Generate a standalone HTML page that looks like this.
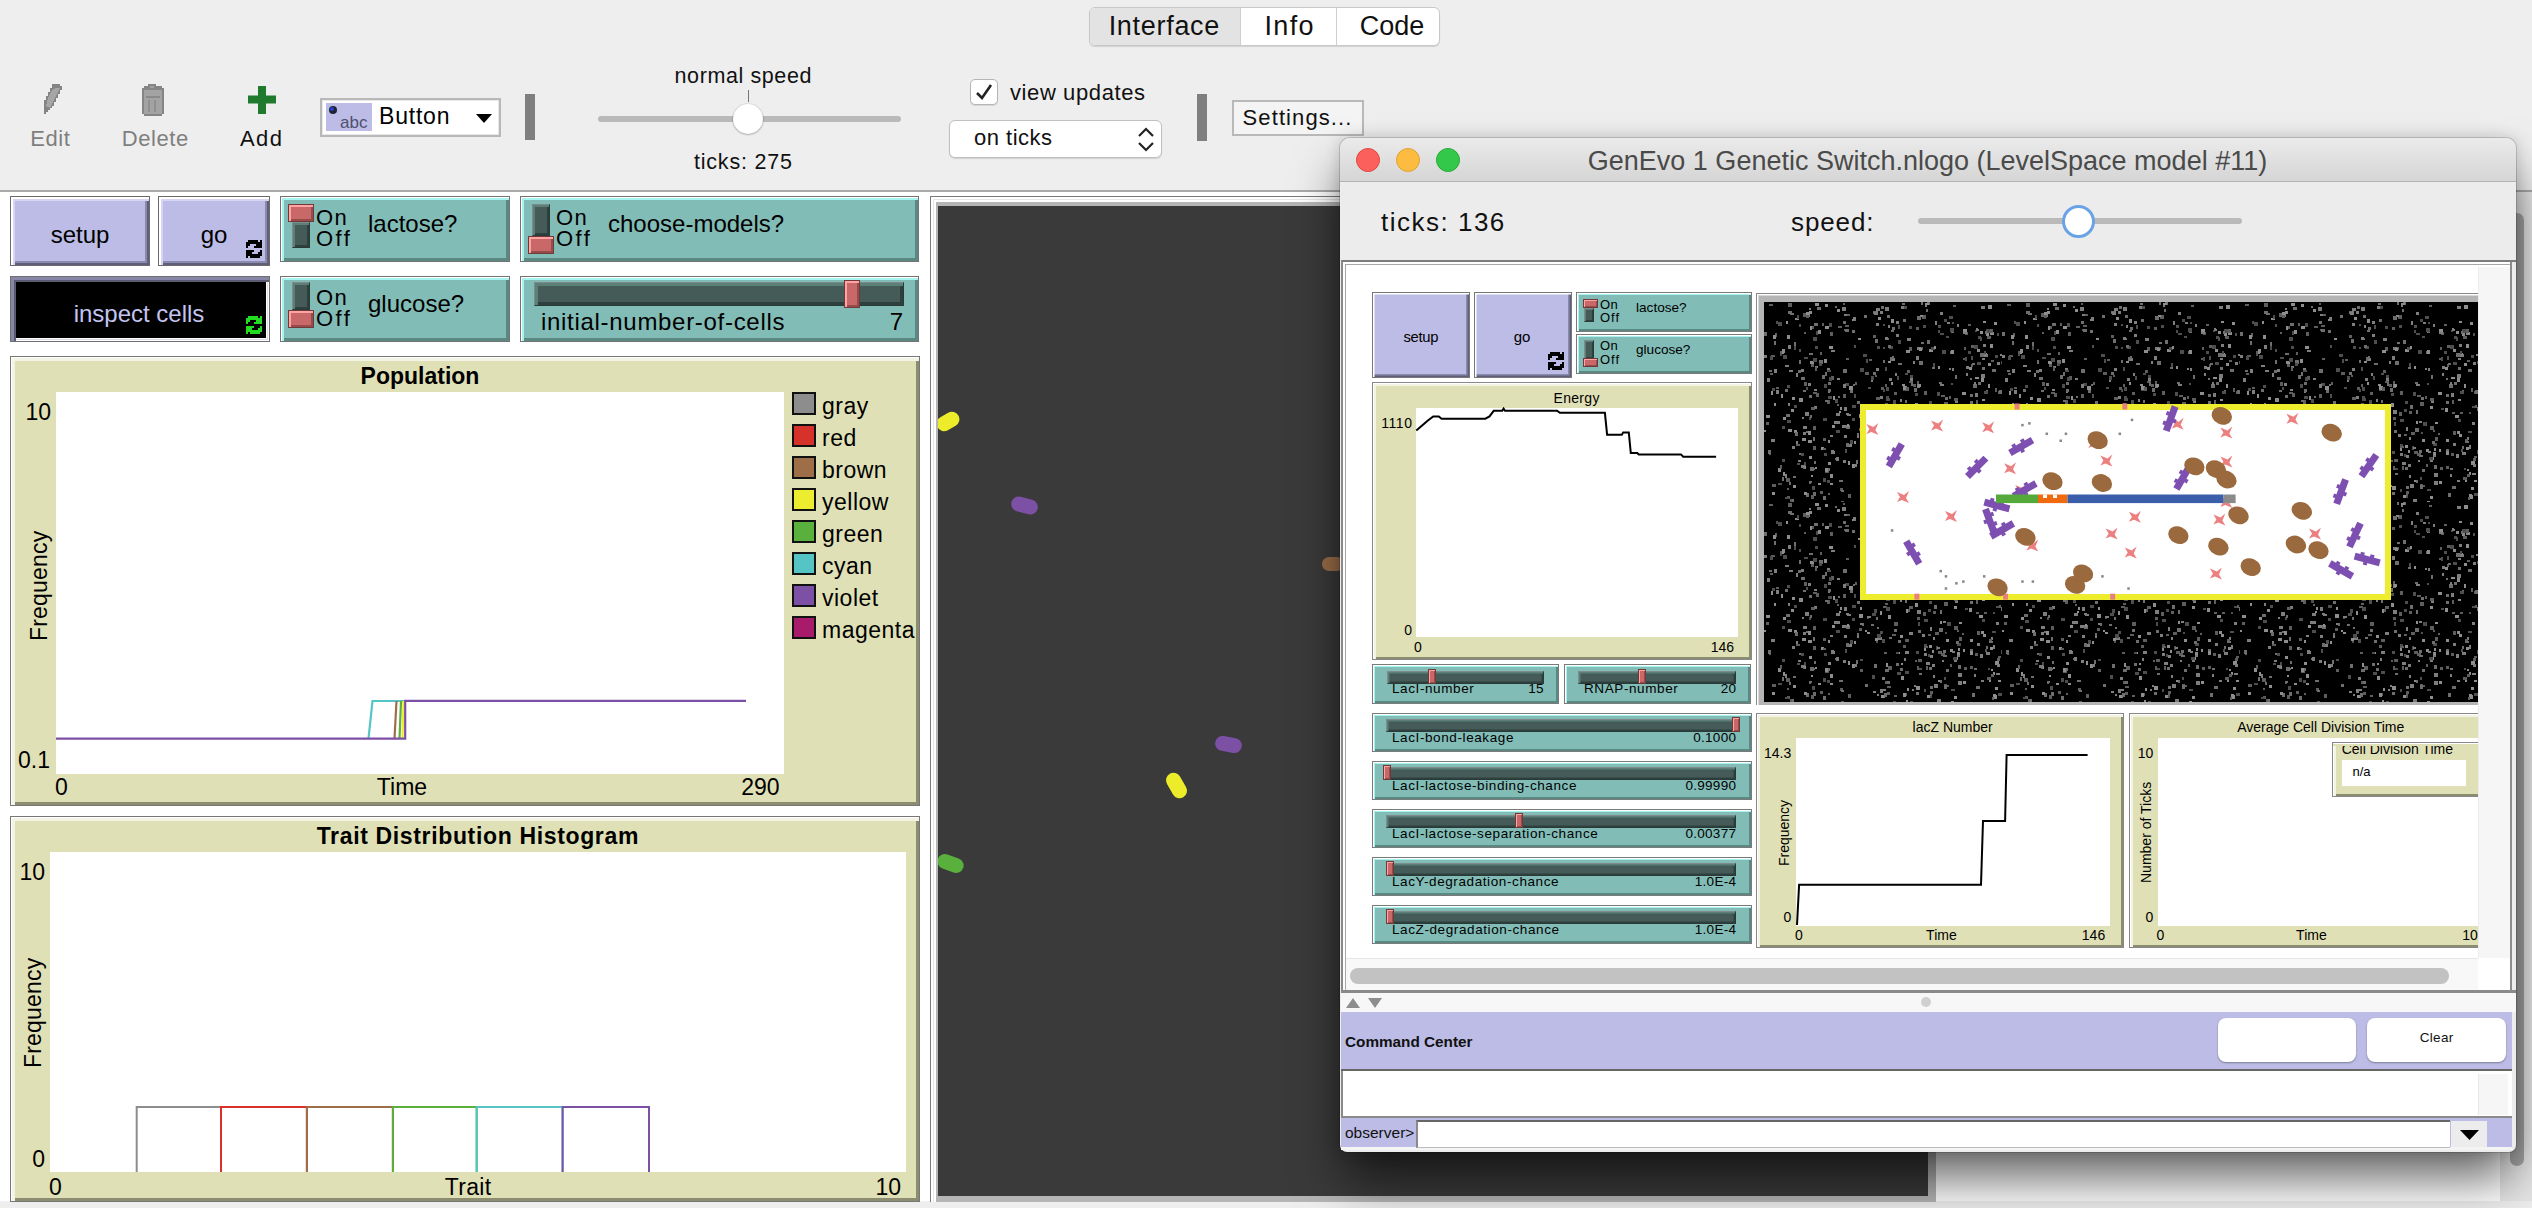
<!DOCTYPE html>
<html><head><meta charset="utf-8"><style>
html,body{margin:0;padding:0;}
body{width:2532px;height:1208px;overflow:hidden;position:relative;background:#ececec;font-family:"Liberation Sans", sans-serif;}
.b{position:absolute;box-sizing:border-box;}
.t{position:absolute;white-space:nowrap;line-height:1;font-family:"Liberation Sans", sans-serif;}
</style></head><body>
<div class="b" style="left:0px;top:0px;width:2532px;height:190px;background:#eeeeee"></div>
<div class="b" style="left:1089px;top:7px;width:351px;height:39px;background:#fff;border:1px solid #c8c8c8;border-radius:6px;box-shadow:0 1px 1px rgba(0,0,0,0.12)"></div>
<div class="b" style="left:1090px;top:8px;width:150px;height:37px;background:#e3e3e3;border-radius:5px 0 0 5px"></div>
<div class="b" style="left:1240px;top:8px;width:1px;height:37px;background:#cfcfcf"></div>
<div class="b" style="left:1336px;top:8px;width:1px;height:37px;background:#cfcfcf"></div>
<div class="t" style="left:664.3499999999999px;width:1000px;text-align:center;top:13.1px;font-size:27px;color:#111;letter-spacing:0.7px;">Interface</div>
<div class="t" style="left:789.6500000000001px;width:1000px;text-align:center;top:13.1px;font-size:27px;color:#111;letter-spacing:1.3px;">Info</div>
<div class="t" style="left:892px;width:1000px;text-align:center;top:13.1px;font-size:27px;color:#111;">Code</div>
<svg class="b" style="left:0;top:0" width="200" height="130" shape-rendering="crispEdges"><polygon points="52,84 60,84 60,86 62,86 62,90 60,90 60,94 58,94 58,98 56,98 56,102 54,102 54,106 52,106 52,108 50,108 50,110 48,110 48,112 46,112 46,114 44,114 44,100 46,100 46,96 48,96 48,92 50,92 50,88 52,88" fill="#848484"/><polygon points="48,98 50,94 52,90 56,88 60,88 58,92 56,96 54,100 52,104 50,108 46,106" fill="#a6a6a6"/><path d="M148,84 h8 v2 h6 v2 h2 v26 h-2 v2 h-18 v-2 h-2 v-26 h2 v-2 h4 Z" fill="#858585"/><rect x="144" y="90" width="18" height="24" fill="#a3a3a3"/><rect x="146" y="96" width="14" height="2" fill="#8a8a8a"/><rect x="148" y="100" width="2" height="12" fill="#909090"/><rect x="154" y="100" width="2" height="12" fill="#909090"/><rect x="150" y="86" width="4" height="2" fill="#a0a0a0"/></svg>
<svg class="b" style="left:247px;top:85px" width="30" height="30" viewBox="0 0 30 30"><rect x="11" y="1" width="8" height="28" fill="#1f7a2e"/><rect x="1" y="10.5" width="28" height="8" fill="#1f7a2e"/></svg>
<div class="t" style="left:-449.7px;width:1000px;text-align:center;top:128.4px;font-size:22px;color:#7f7f7f;letter-spacing:0.6px;">Edit</div>
<div class="t" style="left:-344.7px;width:1000px;text-align:center;top:128.4px;font-size:22px;color:#7f7f7f;letter-spacing:0.6px;">Delete</div>
<div class="t" style="left:-238.3px;width:1000px;text-align:center;top:128.4px;font-size:22px;color:#111;letter-spacing:1.4px;">Add</div>
<div class="b" style="left:320px;top:98px;width:181px;height:39px;background:#fff;border:2px solid #b8b8b8;box-shadow:inset 0 0 0 1px #e8e8e8"></div>
<div class="b" style="left:326px;top:103px;width:46px;height:28px;background:#bcbce6"></div>
<div class="t" style="left:345px;top:104px;font-size:17px;color:#555;letter-spacing:-0.5px;line-height:1">&nbsp;</div>
<div class="t" style="left:340px;top:113.6px;font-size:17px;color:#505070;">abc</div>
<svg class="b" style="left:327px;top:104px" width="14" height="12"><circle cx="6" cy="6" r="4" fill="#223"/><circle cx="5" cy="5" r="2" fill="#24c"/></svg>
<div class="t" style="left:379px;top:104.5px;font-size:23px;color:#000;letter-spacing:0.8px;">Button</div>
<svg class="b" style="left:475px;top:113px" width="18" height="11"><path d="M1 1 L17 1 L9 10 Z" fill="#000"/></svg>
<div class="b" style="left:525px;top:94px;width:10px;height:46px;background:#7f7f7f"></div>
<div class="t" style="left:243.29999999999995px;width:1000px;text-align:center;top:65.8px;font-size:21.5px;color:#111;letter-spacing:0.6px;">normal speed</div>
<div class="b" style="left:747.5px;top:90px;width:1.5px;height:12px;background:#777"></div>
<div class="b" style="left:598px;top:116px;width:303px;height:6px;background:#b9b9b9;border-radius:3px"></div>
<div class="b" style="left:733px;top:104px;width:30px;height:30px;background:#fff;border-radius:50%;box-shadow:0 0.5px 2px rgba(0,0,0,0.45)"></div>
<div class="t" style="left:243.39999999999998px;width:1000px;text-align:center;top:151.8px;font-size:21.5px;color:#111;letter-spacing:0.8px;">ticks: 275</div>
<div class="b" style="left:970px;top:79px;width:28px;height:26px;background:#fff;border:1px solid #b5b5b5;border-radius:5px;box-shadow:0 1px 1px rgba(0,0,0,0.1)"></div>
<svg class="b" style="left:973px;top:82px" width="22" height="20"><path d="M4 11 L9 16 L18 3" stroke="#222" stroke-width="2.6" fill="none"/></svg>
<div class="t" style="left:1010px;top:82.4px;font-size:22px;color:#111;letter-spacing:0.6px;">view updates</div>
<div class="b" style="left:949px;top:120px;width:213px;height:38px;background:#fff;border:1px solid #c0c0c0;border-radius:6px;box-shadow:0 1px 1px rgba(0,0,0,0.12)"></div>
<div class="t" style="left:974px;top:127.4px;font-size:22px;color:#111;letter-spacing:0.5px;">on ticks</div>
<svg class="b" style="left:1136px;top:126px" width="20" height="28"><path d="M3 10 L10 3 L17 10" stroke="#222" stroke-width="2.2" fill="none"/><path d="M3 17 L10 24 L17 17" stroke="#222" stroke-width="2.2" fill="none"/></svg>
<div class="b" style="left:1197px;top:94px;width:10px;height:47px;background:#7f7f7f"></div>
<div class="b" style="left:1232px;top:100px;width:132px;height:36px;background:#f4f4f4;border:2px solid #b9b9b9"></div>
<div class="t" style="left:797.55px;width:1000px;text-align:center;top:107.4px;font-size:22px;color:#111;letter-spacing:1.1px;">Settings...</div>
<div class="b" style="left:0px;top:190px;width:2532px;height:2px;background:#a9a9a9"></div>
<div class="b" style="left:0px;top:192px;width:2532px;height:1009px;background:#fff"></div>
<div class="b" style="left:0px;top:1201px;width:2532px;height:7px;background:#eeeeee"></div>
<div class="b" style="left:10px;top:196px;width:140px;height:70px;background:#bcbce6;border:1px solid #6a6a6a;box-shadow:inset 2px 2px 0 #fff, inset 4px 4px 0 #d6d6f2, inset -2px -2px 0 #5f5f7c, inset -4px -4px 0 #8a8aae"></div>
<div class="t" style="left:-420px;width:1000px;text-align:center;top:223.2px;font-size:24px;color:#000;">setup</div>
<div class="b" style="left:158px;top:196px;width:112px;height:70px;background:#bcbce6;border:1px solid #6a6a6a;box-shadow:inset 2px 2px 0 #fff, inset 4px 4px 0 #d6d6f2, inset -2px -2px 0 #5f5f7c, inset -4px -4px 0 #8a8aae"></div>
<div class="t" style="left:-286px;width:1000px;text-align:center;top:223.2px;font-size:24px;color:#000;">go</div>
<svg class="b" style="left:246px;top:240px" width="16.0" height="18.0" viewBox="0 0 8 9" shape-rendering="crispEdges"><g fill="#000"><rect x="1" y="0" width="5" height="1"/><rect x="7" y="0" width="1" height="1"/><rect x="0" y="1" width="8" height="1"/><rect x="0" y="2" width="2" height="1"/><rect x="5" y="2" width="3" height="1"/><rect x="0" y="3" width="1" height="1"/><rect x="4" y="3" width="4" height="1"/><rect x="0" y="5" width="4" height="1"/><rect x="7" y="5" width="1" height="1"/><rect x="0" y="6" width="3" height="1"/><rect x="6" y="6" width="2" height="1"/><rect x="0" y="7" width="8" height="1"/><rect x="0" y="8" width="1" height="1"/><rect x="2" y="8" width="5" height="1"/></g></svg>
<div class="b" style="left:10px;top:276px;width:260px;height:66px;background:#000;border:1px solid #707070;box-shadow:inset 3px 3px 0 #8686a6, inset 5px 5px 0 #5a5a72, inset -1px -1px 0 #fff, inset -2px -2px 0 #dcdcec, inset -3px -3px 0 #fff"></div>
<div class="t" style="left:-361px;width:1000px;text-align:center;top:301.7px;font-size:24px;color:#c4c4f0;">inspect cells</div>
<svg class="b" style="left:246px;top:316px" width="16.0" height="18.0" viewBox="0 0 8 9" shape-rendering="crispEdges"><g fill="#22dd22"><rect x="1" y="0" width="5" height="1"/><rect x="7" y="0" width="1" height="1"/><rect x="0" y="1" width="8" height="1"/><rect x="0" y="2" width="2" height="1"/><rect x="5" y="2" width="3" height="1"/><rect x="0" y="3" width="1" height="1"/><rect x="4" y="3" width="4" height="1"/><rect x="0" y="5" width="4" height="1"/><rect x="7" y="5" width="1" height="1"/><rect x="0" y="6" width="3" height="1"/><rect x="6" y="6" width="2" height="1"/><rect x="0" y="7" width="8" height="1"/><rect x="0" y="8" width="1" height="1"/><rect x="2" y="8" width="5" height="1"/></g></svg>
<div class="b" style="left:280px;top:196px;width:230px;height:66px;background:#82bcb6;border:1px solid #737373;box-shadow:inset 1px 1px 0 #fff, inset 3px 3px 0 #a8f2ef, inset -3px -3px 0 #5a8883"></div>
<div class="b" style="left:288px;top:204px;width:26px;height:18px;background:#c86868;border:1px solid #6e3a3a;box-shadow:inset 2px 2px 0 #ffa3a3, inset -2px -2px 0 #974b4b"></div>
<div class="b" style="left:292px;top:222px;width:18px;height:26px;background:#445b58;border:1px solid #7d8b89;border-right-color:#2a3a38;border-bottom-color:#2a3a38;box-shadow:inset 2px 2px 0 #5c7f7a, inset -2px -2px 0 #2e403e"></div>
<div class="t" style="left:316px;top:206.9px;font-size:22px;color:#000;letter-spacing:1.5px;">On</div>
<div class="t" style="left:316px;top:227.9px;font-size:22px;color:#000;letter-spacing:2.5px;">Off</div>
<div class="t" style="left:368px;top:211.7px;font-size:24px;color:#000;">lactose?</div>
<div class="b" style="left:280px;top:276px;width:230px;height:66px;background:#82bcb6;border:1px solid #737373;box-shadow:inset 1px 1px 0 #fff, inset 3px 3px 0 #a8f2ef, inset -3px -3px 0 #5a8883"></div>
<div class="b" style="left:292px;top:282px;width:18px;height:28px;background:#445b58;border:1px solid #7d8b89;border-right-color:#2a3a38;border-bottom-color:#2a3a38;box-shadow:inset 2px 2px 0 #5c7f7a, inset -2px -2px 0 #2e403e"></div>
<div class="b" style="left:288px;top:310px;width:26px;height:18px;background:#c86868;border:1px solid #6e3a3a;box-shadow:inset 2px 2px 0 #ffa3a3, inset -2px -2px 0 #974b4b"></div>
<div class="t" style="left:316px;top:286.9px;font-size:22px;color:#000;letter-spacing:1.5px;">On</div>
<div class="t" style="left:316px;top:307.9px;font-size:22px;color:#000;letter-spacing:2.5px;">Off</div>
<div class="t" style="left:368px;top:291.7px;font-size:24px;color:#000;">glucose?</div>
<div class="b" style="left:520px;top:196px;width:399px;height:66px;background:#82bcb6;border:1px solid #737373;box-shadow:inset 1px 1px 0 #fff, inset 3px 3px 0 #a8f2ef, inset -3px -3px 0 #5a8883"></div>
<div class="b" style="left:532px;top:204px;width:18px;height:32px;background:#445b58;border:1px solid #7d8b89;border-right-color:#2a3a38;border-bottom-color:#2a3a38;box-shadow:inset 2px 2px 0 #5c7f7a, inset -2px -2px 0 #2e403e"></div>
<div class="b" style="left:528px;top:236px;width:26px;height:18px;background:#c86868;border:1px solid #6e3a3a;box-shadow:inset 2px 2px 0 #ffa3a3, inset -2px -2px 0 #974b4b"></div>
<div class="t" style="left:556px;top:206.9px;font-size:22px;color:#000;letter-spacing:1.5px;">On</div>
<div class="t" style="left:556px;top:227.9px;font-size:22px;color:#000;letter-spacing:2.5px;">Off</div>
<div class="t" style="left:608px;top:211.7px;font-size:24px;color:#000;">choose-models?</div>
<div class="b" style="left:520px;top:276px;width:399px;height:66px;background:#82bcb6;border:1px solid #737373;box-shadow:inset 1px 1px 0 #fff, inset 3px 3px 0 #a8f2ef, inset -3px -3px 0 #5a8883"></div>
<div class="b" style="left:534px;top:282px;width:370px;height:24px;background:#445b58;border:1px solid #7d8b89;border-right-color:#2a3a38;border-bottom-color:#2a3a38;box-shadow:inset 3px 3px 0 #5c7f7a, inset -3px -3px 0 #2e403e"></div>
<div class="b" style="left:844px;top:280px;width:16px;height:28px;background:#c86868;border:1px solid #6e3a3a;box-shadow:inset 2px 2px 0 #ffa3a3, inset -2px -2px 0 #974b4b"></div>
<div class="t" style="left:541px;top:309.7px;font-size:24px;color:#000;letter-spacing:0.7px;">initial-number-of-cells</div>
<div class="t" style="left:-97px;width:1000px;text-align:right;top:309.7px;font-size:24px;color:#000;">7</div>
<div class="b" style="left:10px;top:356px;width:910px;height:450px;background:#e0e0b6;border:1px solid #777;box-shadow:inset 1px 1px 0 #fff, inset 4px 4px 0 #f4f4e4, inset -3px -3px 0 #8c8c70"></div>
<div class="b" style="left:56px;top:392px;width:728px;height:382px;background:#fff"></div>
<div class="t" style="left:-80px;width:1000px;text-align:center;top:364.5px;font-size:23px;color:#000;font-weight:bold;">Population</div>
<div class="t" style="left:-949px;width:1000px;text-align:right;top:400.9px;font-size:23px;color:#000;">10</div>
<div class="t" style="left:-950px;width:1000px;text-align:right;top:748.5px;font-size:23px;color:#000;">0.1</div>
<div class="t" style="left:55px;top:776.1px;font-size:23px;color:#000;">0</div>
<div class="t" style="left:-98px;width:1000px;text-align:center;top:776.1px;font-size:23px;color:#000;">Time</div>
<div class="t" style="left:-220.5px;width:1000px;text-align:right;top:776.1px;font-size:23px;color:#000;">290</div>
<div class="t" style="left:-10.5px;top:579px;width:100px;text-align:center;font-size:23px;letter-spacing:0.2px;transform:rotate(-90deg);transform-origin:50px 12px">Frequency</div>
<div class="b" style="left:792px;top:392px;width:24px;height:23px;background:#8d8d8d;border:2px solid #111"></div>
<div class="t" style="left:822px;top:394.5px;font-size:23px;color:#000;letter-spacing:0.5px;">gray</div>
<div class="b" style="left:792px;top:424px;width:24px;height:23px;background:#d73229;border:2px solid #111"></div>
<div class="t" style="left:822px;top:426.5px;font-size:23px;color:#000;letter-spacing:0.5px;">red</div>
<div class="b" style="left:792px;top:456px;width:24px;height:23px;background:#9d6e48;border:2px solid #111"></div>
<div class="t" style="left:822px;top:458.5px;font-size:23px;color:#000;letter-spacing:0.5px;">brown</div>
<div class="b" style="left:792px;top:488px;width:24px;height:23px;background:#eded30;border:2px solid #111"></div>
<div class="t" style="left:822px;top:490.5px;font-size:23px;color:#000;letter-spacing:0.5px;">yellow</div>
<div class="b" style="left:792px;top:520px;width:24px;height:23px;background:#59b03c;border:2px solid #111"></div>
<div class="t" style="left:822px;top:522.5px;font-size:23px;color:#000;letter-spacing:0.5px;">green</div>
<div class="b" style="left:792px;top:552px;width:24px;height:23px;background:#54c4c4;border:2px solid #111"></div>
<div class="t" style="left:822px;top:554.5px;font-size:23px;color:#000;letter-spacing:0.5px;">cyan</div>
<div class="b" style="left:792px;top:584px;width:24px;height:23px;background:#7c50a4;border:2px solid #111"></div>
<div class="t" style="left:822px;top:586.5px;font-size:23px;color:#000;letter-spacing:0.5px;">violet</div>
<div class="b" style="left:792px;top:616px;width:24px;height:23px;background:#a71b6a;border:2px solid #111"></div>
<div class="t" style="left:822px;top:618.5px;font-size:23px;color:#000;letter-spacing:0.5px;">magenta</div>
<svg class="b" style="left:0;top:0" width="2532" height="1208"><g fill="none" stroke-width="2.2"><polyline points="368.5,738.5 372.5,701 405.5,701" stroke="#54c4c4"/><polyline points="394.5,738.5 396.5,701" stroke="#9d6e48"/><polyline points="399.5,738.5 401,701" stroke="#59b03c"/><polyline points="402.5,738.5 403.5,701" stroke="#eded30"/><polyline points="56,738.7 405.2,738.7 405.2,700.8 746,700.8" stroke="#7c50a4"/></g></svg>
<div class="b" style="left:10px;top:816px;width:910px;height:386px;background:#e0e0b6;border:1px solid #777;box-shadow:inset 1px 1px 0 #fff, inset 4px 4px 0 #f4f4e4, inset -3px -3px 0 #8c8c70"></div>
<div class="b" style="left:50px;top:852px;width:856px;height:320px;background:#fff"></div>
<div class="t" style="left:-22.17500000000001px;width:1000px;text-align:center;top:824.5px;font-size:23px;color:#000;font-weight:bold;letter-spacing:0.65px;">Trait Distribution Histogram</div>
<div class="t" style="left:-955px;width:1000px;text-align:right;top:860.8px;font-size:23px;color:#000;">10</div>
<div class="t" style="left:-955px;width:1000px;text-align:right;top:1147.5px;font-size:23px;color:#000;">0</div>
<div class="t" style="left:49px;top:1176.0px;font-size:23px;color:#000;">0</div>
<div class="t" style="left:-31.850000000000023px;width:1000px;text-align:center;top:1176.0px;font-size:23px;color:#000;letter-spacing:0.3px;">Trait</div>
<div class="t" style="left:-99px;width:1000px;text-align:right;top:1176.0px;font-size:23px;color:#000;">10</div>
<div class="t" style="left:-16px;top:1006px;width:100px;text-align:center;font-size:23px;letter-spacing:0.2px;transform:rotate(-90deg);transform-origin:50px 12px">Frequency</div>
<svg class="b" style="left:0;top:0" width="2532" height="1208"><g fill="none" stroke-width="2"><polyline points="136.7,1172 136.7,1107 221,1107 221,1172" stroke="#8d8d8d"/><polyline points="221,1172 221,1107 306.9,1107 306.9,1172" stroke="#d73229"/><polyline points="306.9,1172 306.9,1107 392.9,1107 392.9,1172" stroke="#9d6e48"/><polyline points="392.9,1172 392.9,1107 476.7,1107 476.7,1172" stroke="#59b03c"/><polyline points="476.7,1172 476.7,1107 562.6,1107 562.6,1172" stroke="#54c4c4"/><polyline points="562.6,1172 562.6,1107 649,1107 649,1172" stroke="#7c50a4"/></g></svg>
<div class="b" style="left:930px;top:196px;width:1006px;height:1006px;background:#fff;border-top:1px solid #7a7a7a;border-left:1px solid #7a7a7a"></div>
<div class="b" style="left:933px;top:199px;width:1003px;height:1003px;background:#fff;border-top:1px solid #e6e6e6;border-left:1px solid #e6e6e6"></div>
<div class="b" style="left:936px;top:202px;width:1000px;height:1000px;background:#b5b5b5"></div>
<div class="b" style="left:938px;top:206px;width:990px;height:990px;background:#3a3a3a"></div>
<div class="b" style="left:938px;top:206px;width:990px;height:990px;overflow:hidden">
<div class="b" style="left:-2.0px;top:207.5px;width:24px;height:15px;background:#ecec2a;border-radius:7.5px;transform:rotate(-30deg)"></div>
<div class="b" style="left:72.5px;top:291.5px;width:27px;height:15px;background:#7c50a4;border-radius:7.5px;transform:rotate(15deg)"></div>
<div class="b" style="left:276.5px;top:530.5px;width:27px;height:15px;background:#7c50a4;border-radius:7.5px;transform:rotate(10deg)"></div>
<div class="b" style="left:224.5px;top:571.5px;width:27px;height:15px;background:#ecec2a;border-radius:7.5px;transform:rotate(60deg)"></div>
<div class="b" style="left:-1.5px;top:649.5px;width:27px;height:15px;background:#59b03c;border-radius:7.5px;transform:rotate(20deg)"></div>
<div class="b" style="left:384.0px;top:351.0px;width:22px;height:14px;background:#9d6e48;border-radius:7.0px;transform:rotate(0deg)"></div>
</div>
<div class="b" style="left:2500px;top:192px;width:32px;height:1009px;background:#e6e6e6"></div>
<div class="b" style="left:2510px;top:213px;width:14px;height:953px;background:#a6a6a6;border-radius:7px"></div>
<div class="b" style="left:1340px;top:138px;width:1176px;height:1014px;background:#ececec;border-radius:10px 10px 7px 7px;box-shadow:0 30px 50px -4px rgba(0,0,0,0.62), 0 0 16px rgba(0,0,0,0.16), 0 0 0 1px rgba(0,0,0,0.15)"></div>
<div class="b" style="left:1340px;top:138px;width:1176px;height:44px;background:linear-gradient(#ebebeb,#d5d5d5);border-radius:10px 10px 0 0;border-bottom:1px solid #b3b3b3"></div>
<div class="b" style="left:1356px;top:148px;width:24px;height:24px;background:#fc605c;border-radius:50%;border:1px solid #de4841"></div>
<div class="b" style="left:1396px;top:148px;width:24px;height:24px;background:#fdbc40;border-radius:50%;border:1px solid #dea236"></div>
<div class="b" style="left:1436px;top:148px;width:24px;height:24px;background:#34c84a;border-radius:50%;border:1px solid #27aa35"></div>
<div class="t" style="left:1427.5px;width:1000px;text-align:center;top:148.1px;font-size:27px;color:#4a4a4a;">GenEvo 1 Genetic Switch.nlogo (LevelSpace model #11)</div>
<div class="t" style="left:1381px;top:208.5px;font-size:26px;color:#111;letter-spacing:1.5px;">ticks: 136</div>
<div class="t" style="left:1791px;top:208.5px;font-size:26px;color:#111;letter-spacing:0.9px;">speed:</div>
<div class="b" style="left:1918px;top:218px;width:324px;height:6px;background:#bababa;border-radius:3px"></div>
<div class="b" style="left:2062px;top:205px;width:33px;height:33px;background:#fff;border-radius:50%;border:3px solid #69a3e6"></div>
<div class="b" style="left:1341px;top:260px;width:1175px;height:732px;background:#fff;border-top:2px solid #7d7d7d;border-left:2px solid #8a8a8a;box-shadow:inset 2px 2px 0 #fff, inset 3px 3px 0 #a8a8a8"></div>
<div class="b" style="left:2478px;top:267px;width:32px;height:691px;background:#f6f6f6;border-left:1px solid #ececec"></div>
<div class="b" style="left:2510px;top:262px;width:6px;height:730px;background:#ececec;border-left:2px solid #8c8c8c"></div>
<div class="b" style="left:1346px;top:958px;width:1132px;height:32px;background:#f8f8f8;border-top:1px solid #e6e6e6"></div>
<div class="b" style="left:1350px;top:968px;width:1099px;height:16px;background:#c2c2c2;border-radius:8px"></div>
<div class="b" style="left:1341px;top:990px;width:1175px;height:3px;background:#8a8a8a"></div>
<div class="b" style="left:1341px;top:993px;width:1175px;height:19px;background:#f7f7f7"></div>
<svg class="b" style="left:1345px;top:997px" width="40" height="12"><path d="M1 11 L8 1 L15 11 Z" fill="#8d8d8d"/><path d="M23 1 L37 1 L30 11 Z" fill="#8d8d8d"/></svg>
<div class="b" style="left:1921px;top:997px;width:10px;height:10px;background:#d0d0d0;border-radius:50%"></div>
<div class="b" style="left:1341px;top:1012px;width:1171px;height:59px;background:#bcbce6;border-bottom:2px solid #666"></div>
<div class="t" style="left:1345px;top:1033.6px;font-size:15.3px;color:#111;font-weight:bold;">Command Center</div>
<div class="b" style="left:2218px;top:1018px;width:138px;height:44px;background:#fff;border-radius:8px;box-shadow:0 1px 2px rgba(0,0,0,0.35)"></div>
<div class="b" style="left:2367px;top:1018px;width:139px;height:44px;background:#fff;border-radius:8px;box-shadow:0 1px 2px rgba(0,0,0,0.35)"></div>
<div class="t" style="left:1936.65px;width:1000px;text-align:center;top:1030.8px;font-size:13.5px;color:#111;letter-spacing:0.3px;">Clear</div>
<div class="b" style="left:1341px;top:1071px;width:1171px;height:47px;background:#fff;border-left:2px solid #8a8a8a;border-bottom:2px solid #8a8a8a"></div>
<div class="b" style="left:2478px;top:1074px;width:30px;height:41px;background:#f6f6f6;border-left:1px solid #e8e8e8"></div>
<div class="b" style="left:1341px;top:1118px;width:1171px;height:32px;background:#bcbce6;border-bottom:3px solid #f4f4f4"></div>
<div class="t" style="left:1345px;top:1124.9px;font-size:15.5px;color:#111;">observer&gt;</div>
<div class="b" style="left:1416px;top:1120px;width:1034px;height:28px;background:#fff;border-top:2px solid #666;border-left:2px solid #8a8a8a;border-bottom:1px solid #bbb"></div>
<div class="b" style="left:2451px;top:1121px;width:36px;height:26px;background:#ececec"></div>
<svg class="b" style="left:2460px;top:1130px" width="19" height="11"><path d="M0 0 L19 0 L9.5 10 Z" fill="#000"/></svg>
<div class="b" style="left:1372px;top:292px;width:98px;height:86px;background:#bcbce6;border:1px solid #777;box-shadow:inset 1.5px 1.5px 0 #fff, inset -1.5px -1.5px 0 #5f5f7c, inset -3px -3px 0 #8a8aae"></div>
<div class="t" style="left:920.8499999999999px;width:1000px;text-align:center;top:329.5px;font-size:14.8px;color:#000;letter-spacing:-0.3px;">setup</div>
<div class="b" style="left:1474px;top:292px;width:98px;height:86px;background:#bcbce6;border:1px solid #777;box-shadow:inset 1.5px 1.5px 0 #fff, inset -1.5px -1.5px 0 #5f5f7c, inset -3px -3px 0 #8a8aae"></div>
<div class="t" style="left:1022px;width:1000px;text-align:center;top:329.3px;font-size:15px;color:#000;">go</div>
<svg class="b" style="left:1548px;top:352px" width="16.0" height="18.0" viewBox="0 0 8 9" shape-rendering="crispEdges"><g fill="#000"><rect x="1" y="0" width="5" height="1"/><rect x="7" y="0" width="1" height="1"/><rect x="0" y="1" width="8" height="1"/><rect x="0" y="2" width="2" height="1"/><rect x="5" y="2" width="3" height="1"/><rect x="0" y="3" width="1" height="1"/><rect x="4" y="3" width="4" height="1"/><rect x="0" y="5" width="4" height="1"/><rect x="7" y="5" width="1" height="1"/><rect x="0" y="6" width="3" height="1"/><rect x="6" y="6" width="2" height="1"/><rect x="0" y="7" width="8" height="1"/><rect x="0" y="8" width="1" height="1"/><rect x="2" y="8" width="5" height="1"/></g></svg>
<div class="b" style="left:1576px;top:292px;width:176px;height:40px;background:#82bcb6;border:1px solid #7a7a7a;box-shadow:inset 1px 1px 0 #fff, inset 2px 2px 0 #a8f2ef, inset -2px -2px 0 #5a8883"></div>
<div class="b" style="left:1583px;top:299px;width:15px;height:9px;background:#c86868;border:1px solid #6e3a3a;box-shadow:inset 1px 1px 0 #ffa3a3, inset -1px -1px 0 #974b4b"></div>
<div class="b" style="left:1584px;top:308px;width:10px;height:14px;background:#445b58;border:1px solid #7d8b89;border-right-color:#2a3a38;border-bottom-color:#2a3a38;box-shadow:inset 1px 1px 0 #5c7f7a, inset -1px -1px 0 #2e403e"></div>
<div class="t" style="left:1600px;top:297.5px;font-size:13px;color:#000;letter-spacing:0.5px;">On</div>
<div class="t" style="left:1600px;top:310.8px;font-size:13px;color:#000;letter-spacing:1px;">Off</div>
<div class="t" style="left:1636px;top:300.5px;font-size:13.6px;color:#000;">lactose?</div>
<div class="b" style="left:1576px;top:334px;width:176px;height:40px;background:#82bcb6;border:1px solid #7a7a7a;box-shadow:inset 1px 1px 0 #fff, inset 2px 2px 0 #a8f2ef, inset -2px -2px 0 #5a8883"></div>
<div class="b" style="left:1584px;top:340px;width:10px;height:19px;background:#445b58;border:1px solid #7d8b89;border-right-color:#2a3a38;border-bottom-color:#2a3a38;box-shadow:inset 1px 1px 0 #5c7f7a, inset -1px -1px 0 #2e403e"></div>
<div class="b" style="left:1583px;top:358px;width:15px;height:9px;background:#c86868;border:1px solid #6e3a3a;box-shadow:inset 1px 1px 0 #ffa3a3, inset -1px -1px 0 #974b4b"></div>
<div class="t" style="left:1600px;top:339.0px;font-size:13px;color:#000;letter-spacing:0.5px;">On</div>
<div class="t" style="left:1600px;top:352.8px;font-size:13px;color:#000;letter-spacing:1px;">Off</div>
<div class="t" style="left:1636px;top:342.8px;font-size:13.6px;color:#000;">glucose?</div>
<div class="b" style="left:1372px;top:382px;width:380px;height:278px;background:#e0e0b6;border:1px solid #888;box-shadow:inset 1px 1px 0 #fff, inset 3px 3px 0 #f4f4e4, inset -2px -2px 0 #8c8c70"></div>
<div class="b" style="left:1416px;top:408px;width:322px;height:229px;background:#fff"></div>
<div class="t" style="left:1076.65px;width:1000px;text-align:center;top:391.1px;font-size:14px;color:#000;letter-spacing:0.3px;">Energy</div>
<div class="t" style="left:412.5999999999999px;width:1000px;text-align:right;top:416.4px;font-size:14px;color:#000;letter-spacing:0.6px;">1110</div>
<div class="t" style="left:412px;width:1000px;text-align:right;top:622.7px;font-size:14px;color:#000;">0</div>
<div class="t" style="left:1414px;top:640.4px;font-size:14px;color:#000;">0</div>
<div class="t" style="left:734px;width:1000px;text-align:right;top:640.4px;font-size:14px;color:#000;">146</div>
<svg class="b" style="left:0;top:0" width="2532" height="1208"><polyline points="1416.3,430.5 1427.6,420.7 1433.2,416.4 1438.8,416.4 1441.6,418.7 1485.3,418.7 1489.5,416.4 1493.7,410.8 1502.2,410.8 1503.6,408.6 1505.0,410.8 1557.0,410.8 1559.9,412.8 1604.9,412.8 1607.1,434.7 1621.8,434.7 1623.2,432.5 1628.8,432.5 1630.8,453.0 1637.3,453.0 1638.7,454.4 1680.9,454.4 1683.2,456.7 1716.1,456.7" fill="none" stroke="#000" stroke-width="2"/></svg>
<div class="b" style="left:1372px;top:664px;width:187px;height:40px;background:#82bcb6;border:1px solid #7a7a7a;box-shadow:inset 1px 1px 0 #fff, inset 2px 2px 0 #a8f2ef, inset -2px -2px 0 #5a8883"></div>
<div class="b" style="left:1387px;top:670.5px;width:156.5px;height:13.0px;background:#445b58;border:1px solid #7d8b89;border-right-color:#2a3a38;border-bottom-color:#2a3a38;box-shadow:inset 1.5px 1.5px 0 #5c7f7a, inset -1.5px -1.5px 0 #2e403e"></div>
<div class="b" style="left:1428px;top:668.5px;width:8px;height:15.0px;background:#c86868;border:1px solid #6e3a3a;box-shadow:inset 1px 1px 0 #ffa3a3, inset -1px -1px 0 #974b4b"></div>
<div class="t" style="left:1392px;top:682.1px;font-size:13.5px;color:#000;letter-spacing:0.6px;">LacI-number</div>
<div class="t" style="left:543.8px;width:1000px;text-align:right;top:682.1px;font-size:13.5px;color:#000;letter-spacing:0.3px;">15</div>
<div class="b" style="left:1564px;top:664px;width:187px;height:40px;background:#82bcb6;border:1px solid #7a7a7a;box-shadow:inset 1px 1px 0 #fff, inset 2px 2px 0 #a8f2ef, inset -2px -2px 0 #5a8883"></div>
<div class="b" style="left:1578px;top:670.5px;width:158px;height:13.0px;background:#445b58;border:1px solid #7d8b89;border-right-color:#2a3a38;border-bottom-color:#2a3a38;box-shadow:inset 1.5px 1.5px 0 #5c7f7a, inset -1.5px -1.5px 0 #2e403e"></div>
<div class="b" style="left:1638px;top:668.5px;width:8px;height:15.0px;background:#c86868;border:1px solid #6e3a3a;box-shadow:inset 1px 1px 0 #ffa3a3, inset -1px -1px 0 #974b4b"></div>
<div class="t" style="left:1584px;top:682.1px;font-size:13.5px;color:#000;letter-spacing:0.6px;">RNAP-number</div>
<div class="t" style="left:736.3px;width:1000px;text-align:right;top:682.1px;font-size:13.5px;color:#000;letter-spacing:0.3px;">20</div>
<div class="b" style="left:1372px;top:712.5px;width:380px;height:39.0px;background:#82bcb6;border:1px solid #7a7a7a;box-shadow:inset 1px 1px 0 #fff, inset 2px 2px 0 #a8f2ef, inset -2px -2px 0 #5a8883"></div>
<div class="b" style="left:1386px;top:719.0px;width:350px;height:13.0px;background:#445b58;border:1px solid #7d8b89;border-right-color:#2a3a38;border-bottom-color:#2a3a38;box-shadow:inset 1.5px 1.5px 0 #5c7f7a, inset -1.5px -1.5px 0 #2e403e"></div>
<div class="b" style="left:1732px;top:717.0px;width:8px;height:15.0px;background:#c86868;border:1px solid #6e3a3a;box-shadow:inset 1px 1px 0 #ffa3a3, inset -1px -1px 0 #974b4b"></div>
<div class="t" style="left:1392px;top:730.6px;font-size:13.5px;color:#000;letter-spacing:0.6px;">LacI-bond-leakage</div>
<div class="t" style="left:736.3px;width:1000px;text-align:right;top:730.6px;font-size:13.5px;color:#000;letter-spacing:0.3px;">0.1000</div>
<div class="b" style="left:1372px;top:760.6px;width:380px;height:39.0px;background:#82bcb6;border:1px solid #7a7a7a;box-shadow:inset 1px 1px 0 #fff, inset 2px 2px 0 #a8f2ef, inset -2px -2px 0 #5a8883"></div>
<div class="b" style="left:1386px;top:767.1px;width:350px;height:13.0px;background:#445b58;border:1px solid #7d8b89;border-right-color:#2a3a38;border-bottom-color:#2a3a38;box-shadow:inset 1.5px 1.5px 0 #5c7f7a, inset -1.5px -1.5px 0 #2e403e"></div>
<div class="b" style="left:1382.5px;top:765.1px;width:8.0px;height:15.0px;background:#c86868;border:1px solid #6e3a3a;box-shadow:inset 1px 1px 0 #ffa3a3, inset -1px -1px 0 #974b4b"></div>
<div class="t" style="left:1392px;top:778.7px;font-size:13.5px;color:#000;letter-spacing:0.6px;">LacI-lactose-binding-chance</div>
<div class="t" style="left:736.3px;width:1000px;text-align:right;top:778.7px;font-size:13.5px;color:#000;letter-spacing:0.3px;">0.99990</div>
<div class="b" style="left:1372px;top:808.7px;width:380px;height:39.0px;background:#82bcb6;border:1px solid #7a7a7a;box-shadow:inset 1px 1px 0 #fff, inset 2px 2px 0 #a8f2ef, inset -2px -2px 0 #5a8883"></div>
<div class="b" style="left:1386px;top:815.2px;width:350px;height:13.0px;background:#445b58;border:1px solid #7d8b89;border-right-color:#2a3a38;border-bottom-color:#2a3a38;box-shadow:inset 1.5px 1.5px 0 #5c7f7a, inset -1.5px -1.5px 0 #2e403e"></div>
<div class="b" style="left:1514.5px;top:813.2px;width:8.0px;height:15.0px;background:#c86868;border:1px solid #6e3a3a;box-shadow:inset 1px 1px 0 #ffa3a3, inset -1px -1px 0 #974b4b"></div>
<div class="t" style="left:1392px;top:826.8px;font-size:13.5px;color:#000;letter-spacing:0.6px;">LacI-lactose-separation-chance</div>
<div class="t" style="left:736.3px;width:1000px;text-align:right;top:826.8px;font-size:13.5px;color:#000;letter-spacing:0.3px;">0.00377</div>
<div class="b" style="left:1372px;top:856.8px;width:380px;height:39.0px;background:#82bcb6;border:1px solid #7a7a7a;box-shadow:inset 1px 1px 0 #fff, inset 2px 2px 0 #a8f2ef, inset -2px -2px 0 #5a8883"></div>
<div class="b" style="left:1386px;top:863.3px;width:350px;height:13.0px;background:#445b58;border:1px solid #7d8b89;border-right-color:#2a3a38;border-bottom-color:#2a3a38;box-shadow:inset 1.5px 1.5px 0 #5c7f7a, inset -1.5px -1.5px 0 #2e403e"></div>
<div class="b" style="left:1386.3px;top:861.3px;width:8.0px;height:15.0px;background:#c86868;border:1px solid #6e3a3a;box-shadow:inset 1px 1px 0 #ffa3a3, inset -1px -1px 0 #974b4b"></div>
<div class="t" style="left:1392px;top:874.9px;font-size:13.5px;color:#000;letter-spacing:0.6px;">LacY-degradation-chance</div>
<div class="t" style="left:736.3px;width:1000px;text-align:right;top:874.9px;font-size:13.5px;color:#000;letter-spacing:0.3px;">1.0E-4</div>
<div class="b" style="left:1372px;top:904.9px;width:380px;height:39.0px;background:#82bcb6;border:1px solid #7a7a7a;box-shadow:inset 1px 1px 0 #fff, inset 2px 2px 0 #a8f2ef, inset -2px -2px 0 #5a8883"></div>
<div class="b" style="left:1386px;top:911.4px;width:350px;height:13.0px;background:#445b58;border:1px solid #7d8b89;border-right-color:#2a3a38;border-bottom-color:#2a3a38;box-shadow:inset 1.5px 1.5px 0 #5c7f7a, inset -1.5px -1.5px 0 #2e403e"></div>
<div class="b" style="left:1386.3px;top:909.4px;width:8.0px;height:15.0px;background:#c86868;border:1px solid #6e3a3a;box-shadow:inset 1px 1px 0 #ffa3a3, inset -1px -1px 0 #974b4b"></div>
<div class="t" style="left:1392px;top:923.0px;font-size:13.5px;color:#000;letter-spacing:0.6px;">LacZ-degradation-chance</div>
<div class="t" style="left:736.3px;width:1000px;text-align:right;top:923.0px;font-size:13.5px;color:#000;letter-spacing:0.3px;">1.0E-4</div>
<div class="b" style="left:1756px;top:713px;width:368px;height:235px;background:#e0e0b6;border:1px solid #888;box-shadow:inset 1px 1px 0 #fff, inset 3px 3px 0 #f4f4e4, inset -2px -2px 0 #8c8c70"></div>
<div class="b" style="left:1796px;top:738px;width:314px;height:188px;background:#fff"></div>
<div class="t" style="left:1452.7px;width:1000px;text-align:center;top:720.4px;font-size:14px;color:#000;">lacZ Number</div>
<div class="t" style="left:791.3px;width:1000px;text-align:right;top:746.2px;font-size:14px;color:#000;">14.3</div>
<div class="t" style="left:791.3px;width:1000px;text-align:right;top:909.8px;font-size:14px;color:#000;">0</div>
<div class="t" style="left:1795px;top:928.1px;font-size:14px;color:#000;">0</div>
<div class="t" style="left:1441.4px;width:1000px;text-align:center;top:928.1px;font-size:14px;color:#000;">Time</div>
<div class="t" style="left:1105.1999999999998px;width:1000px;text-align:right;top:928.1px;font-size:14px;color:#000;">146</div>
<div class="t" style="left:1734px;top:826px;width:100px;text-align:center;font-size:14px;transform:rotate(-90deg);transform-origin:50px 7px">Frequency</div>
<svg class="b" style="left:0;top:0" width="2532" height="1208"><polyline points="1797,925 1799.1,884.7 1981,884.7 1983,821 2005.1,821 2006.6,754.9 2087.6,754.9" fill="none" stroke="#000" stroke-width="2"/></svg>
<div class="b" style="left:2100px;top:700px;width:378px;height:260px;overflow:hidden">
<div class="b" style="left:28.6px;top:13px;width:391.4px;height:235px;background:#e0e0b6;border:1px solid #888;box-shadow:inset 1px 1px 0 #fff, inset 3px 3px 0 #f4f4e4, inset -2px -2px 0 #8c8c70"></div>
<div class="b" style="left:58px;top:38.3px;width:362px;height:187.7px;background:#fff"></div>
<div class="t" style="left:-279.3px;width:1000px;text-align:center;top:20.4px;font-size:14px;color:#000;">Average Cell Division Time</div>
<div class="t" style="left:-946.6px;width:1000px;text-align:right;top:46.1px;font-size:14px;color:#000;">10</div>
<div class="t" style="left:-946.6px;width:1000px;text-align:right;top:209.8px;font-size:14px;color:#000;">0</div>
<div class="t" style="left:56.6px;top:228.1px;font-size:14px;color:#000;">0</div>
<div class="t" style="left:-288.6px;width:1000px;text-align:center;top:228.1px;font-size:14px;color:#000;">Time</div>
<div class="t" style="left:-622.2px;width:1000px;text-align:right;top:228.1px;font-size:14px;color:#000;">10</div>
<div class="t" style="left:-4px;top:126px;width:100px;text-align:center;font-size:14px;transform:rotate(-90deg);transform-origin:50px 7px">Number of Ticks</div>
<div class="b" style="left:232px;top:42.4px;width:160px;height:55px;overflow:hidden;background:#e0e0b6;border:1px solid #888;box-shadow:inset 1px 1px 0 #fff, inset 3px 3px 0 #f4f4e4, inset -2px -2px 0 #8c8c70"></div>
<div class="t" style="left:241.7px;top:42.1px;font-size:14px;color:#000;">Cell Division Time</div>
<div class="b" style="left:233px;top:42.4px;width:145px;height:3.6000000000000014px;background:#e0e0b6;border-top:1px solid #888;box-shadow:inset 0 1px 0 #fff"></div>
<div class="b" style="left:241.7px;top:60.3px;width:124.30000000000001px;height:25.400000000000006px;background:#fff"></div>
<div class="t" style="left:252.5px;top:65.4px;font-size:13px;color:#000;">n/a</div>
</div>
<div class="b" style="left:1756px;top:293px;width:722px;height:412px;background:#b5b5b5;border-top:1px solid #888;border-left:1px solid #888;box-shadow:inset 1px 1px 0 #fff, inset 2px 2px 0 #d8d8d8"></div>
<svg class="b" style="left:1764px;top:302px" width="714" height="400"><defs><pattern id="nz" width="238" height="200" patternUnits="userSpaceOnUse"><rect x="60" y="151" width="3" height="3" fill="#4e4e4e"/><rect x="234" y="154" width="2" height="2" fill="#8e8e8e"/><rect x="232" y="120" width="3" height="3" fill="#7e7e7e"/><rect x="183" y="120" width="4" height="4" fill="#4e4e4e"/><rect x="163" y="38" width="3" height="4" fill="#6e6e6e"/><rect x="189" y="3" width="3" height="2" fill="#5e5e5e"/><rect x="77" y="199" width="3" height="4" fill="#5e5e5e"/><rect x="152" y="184" width="4" height="4" fill="#8e8e8e"/><rect x="186" y="147" width="3" height="3" fill="#8e8e8e"/><rect x="24" y="9" width="4" height="3" fill="#6e6e6e"/><rect x="66" y="172" width="3" height="4" fill="#8e8e8e"/><rect x="129" y="98" width="3" height="4" fill="#4e4e4e"/><rect x="149" y="59" width="2" height="3" fill="#7e7e7e"/><rect x="155" y="171" width="3" height="2" fill="#6e6e6e"/><rect x="182" y="167" width="3" height="3" fill="#6e6e6e"/><rect x="31" y="16" width="4" height="2" fill="#8e8e8e"/><rect x="88" y="17" width="3" height="2" fill="#8e8e8e"/><rect x="75" y="109" width="2" height="2" fill="#8e8e8e"/><rect x="154" y="157" width="4" height="3" fill="#5e5e5e"/><rect x="141" y="71" width="3" height="2" fill="#4e4e4e"/><rect x="79" y="1" width="2" height="2" fill="#5e5e5e"/><rect x="50" y="104" width="3" height="3" fill="#7e7e7e"/><rect x="176" y="10" width="3" height="3" fill="#7e7e7e"/><rect x="35" y="96" width="4" height="4" fill="#8e8e8e"/><rect x="164" y="152" width="2" height="3" fill="#4e4e4e"/><rect x="110" y="162" width="3" height="4" fill="#6e6e6e"/><rect x="66" y="133" width="3" height="2" fill="#7e7e7e"/><rect x="201" y="106" width="3" height="2" fill="#4e4e4e"/><rect x="96" y="157" width="3" height="2" fill="#4e4e4e"/><rect x="162" y="160" width="4" height="3" fill="#7e7e7e"/><rect x="173" y="90" width="3" height="4" fill="#4e4e4e"/><rect x="5" y="150" width="2" height="3" fill="#5e5e5e"/><rect x="64" y="160" width="3" height="3" fill="#8e8e8e"/><rect x="45" y="93" width="3" height="3" fill="#6e6e6e"/><rect x="216" y="152" width="3" height="4" fill="#7e7e7e"/><rect x="26" y="197" width="3" height="3" fill="#5e5e5e"/><rect x="128" y="56" width="3" height="3" fill="#7e7e7e"/><rect x="47" y="173" width="2" height="2" fill="#8e8e8e"/><rect x="153" y="82" width="3" height="4" fill="#7e7e7e"/><rect x="207" y="43" width="3" height="3" fill="#5e5e5e"/><rect x="226" y="145" width="3" height="3" fill="#8e8e8e"/><rect x="201" y="30" width="3" height="3" fill="#5e5e5e"/><rect x="206" y="147" width="3" height="3" fill="#6e6e6e"/><rect x="206" y="164" width="3" height="3" fill="#5e5e5e"/><rect x="107" y="74" width="3" height="4" fill="#4e4e4e"/><rect x="88" y="162" width="3" height="4" fill="#8e8e8e"/><rect x="145" y="104" width="4" height="3" fill="#5e5e5e"/><rect x="51" y="1" width="4" height="3" fill="#8e8e8e"/><rect x="8" y="190" width="3" height="3" fill="#8e8e8e"/><rect x="227" y="58" width="3" height="2" fill="#5e5e5e"/><rect x="207" y="62" width="2" height="3" fill="#5e5e5e"/><rect x="229" y="110" width="2" height="2" fill="#4e4e4e"/><rect x="123" y="190" width="3" height="3" fill="#5e5e5e"/><rect x="61" y="169" width="4" height="2" fill="#5e5e5e"/><rect x="233" y="156" width="3" height="3" fill="#5e5e5e"/><rect x="64" y="138" width="2" height="3" fill="#8e8e8e"/><rect x="56" y="50" width="2" height="3" fill="#5e5e5e"/><rect x="61" y="70" width="2" height="4" fill="#6e6e6e"/><rect x="160" y="146" width="2" height="3" fill="#8e8e8e"/><rect x="63" y="68" width="4" height="2" fill="#4e4e4e"/><rect x="121" y="82" width="2" height="3" fill="#5e5e5e"/><rect x="11" y="31" width="2" height="4" fill="#5e5e5e"/><rect x="8" y="182" width="4" height="3" fill="#5e5e5e"/><rect x="40" y="80" width="3" height="4" fill="#5e5e5e"/><rect x="165" y="99" width="3" height="3" fill="#4e4e4e"/><rect x="67" y="48" width="4" height="2" fill="#7e7e7e"/><rect x="32" y="142" width="4" height="2" fill="#5e5e5e"/><rect x="145" y="45" width="3" height="4" fill="#5e5e5e"/><rect x="154" y="166" width="4" height="2" fill="#4e4e4e"/><rect x="159" y="110" width="3" height="4" fill="#5e5e5e"/><rect x="194" y="179" width="4" height="4" fill="#7e7e7e"/><rect x="117" y="4" width="3" height="3" fill="#6e6e6e"/><rect x="177" y="151" width="4" height="3" fill="#5e5e5e"/><rect x="109" y="33" width="3" height="3" fill="#5e5e5e"/><rect x="229" y="143" width="2" height="4" fill="#7e7e7e"/><rect x="176" y="31" width="4" height="2" fill="#4e4e4e"/><rect x="187" y="81" width="2" height="2" fill="#4e4e4e"/><rect x="121" y="36" width="4" height="2" fill="#6e6e6e"/><rect x="134" y="23" width="2" height="4" fill="#4e4e4e"/><rect x="45" y="6" width="2" height="2" fill="#7e7e7e"/><rect x="216" y="29" width="3" height="3" fill="#8e8e8e"/><rect x="204" y="22" width="3" height="2" fill="#5e5e5e"/><rect x="141" y="191" width="2" height="3" fill="#5e5e5e"/><rect x="222" y="144" width="2" height="3" fill="#6e6e6e"/><rect x="46" y="165" width="4" height="4" fill="#6e6e6e"/><rect x="64" y="94" width="4" height="3" fill="#4e4e4e"/><rect x="142" y="107" width="4" height="3" fill="#5e5e5e"/><rect x="237" y="105" width="4" height="4" fill="#6e6e6e"/><rect x="39" y="164" width="3" height="3" fill="#8e8e8e"/><rect x="24" y="127" width="4" height="3" fill="#8e8e8e"/><rect x="34" y="68" width="3" height="3" fill="#6e6e6e"/><rect x="59" y="176" width="3" height="4" fill="#4e4e4e"/><rect x="152" y="149" width="3" height="3" fill="#4e4e4e"/><rect x="78" y="5" width="4" height="4" fill="#7e7e7e"/><rect x="51" y="44" width="3" height="3" fill="#4e4e4e"/><rect x="82" y="123" width="4" height="4" fill="#6e6e6e"/><rect x="179" y="153" width="4" height="2" fill="#6e6e6e"/><rect x="123" y="184" width="4" height="2" fill="#5e5e5e"/><rect x="119" y="58" width="2" height="3" fill="#6e6e6e"/><rect x="218" y="65" width="3" height="3" fill="#6e6e6e"/><rect x="35" y="47" width="2" height="3" fill="#4e4e4e"/><rect x="43" y="11" width="3" height="4" fill="#7e7e7e"/><rect x="23" y="186" width="2" height="2" fill="#5e5e5e"/><rect x="67" y="74" width="3" height="4" fill="#5e5e5e"/><rect x="148" y="187" width="2" height="2" fill="#7e7e7e"/><rect x="85" y="84" width="4" height="4" fill="#8e8e8e"/><rect x="19" y="53" width="4" height="4" fill="#4e4e4e"/><rect x="32" y="139" width="2" height="3" fill="#7e7e7e"/><rect x="19" y="170" width="2" height="4" fill="#8e8e8e"/><rect x="227" y="135" width="2" height="3" fill="#7e7e7e"/><rect x="173" y="197" width="4" height="3" fill="#7e7e7e"/><rect x="169" y="173" width="2" height="3" fill="#7e7e7e"/><rect x="172" y="144" width="2" height="4" fill="#4e4e4e"/><rect x="130" y="90" width="3" height="3" fill="#5e5e5e"/><rect x="165" y="165" width="3" height="3" fill="#6e6e6e"/><rect x="227" y="167" width="2" height="2" fill="#8e8e8e"/><rect x="143" y="36" width="4" height="3" fill="#7e7e7e"/><rect x="165" y="47" width="4" height="3" fill="#8e8e8e"/><rect x="200" y="45" width="2" height="3" fill="#5e5e5e"/><rect x="193" y="141" width="4" height="3" fill="#4e4e4e"/><rect x="25" y="68" width="4" height="2" fill="#7e7e7e"/><rect x="223" y="34" width="4" height="3" fill="#5e5e5e"/><rect x="63" y="178" width="3" height="3" fill="#4e4e4e"/><rect x="103" y="114" width="2" height="3" fill="#4e4e4e"/><rect x="127" y="28" width="3" height="2" fill="#6e6e6e"/><rect x="174" y="28" width="2" height="3" fill="#4e4e4e"/><rect x="178" y="48" width="4" height="4" fill="#4e4e4e"/><rect x="208" y="191" width="3" height="4" fill="#6e6e6e"/><rect x="204" y="49" width="3" height="3" fill="#4e4e4e"/><rect x="51" y="64" width="3" height="2" fill="#7e7e7e"/><rect x="215" y="113" width="4" height="3" fill="#8e8e8e"/><rect x="141" y="149" width="4" height="3" fill="#7e7e7e"/><rect x="229" y="170" width="2" height="3" fill="#8e8e8e"/><rect x="186" y="162" width="2" height="3" fill="#5e5e5e"/><rect x="125" y="44" width="4" height="3" fill="#4e4e4e"/><rect x="49" y="135" width="2" height="4" fill="#6e6e6e"/><rect x="28" y="144" width="3" height="3" fill="#7e7e7e"/><rect x="119" y="22" width="2" height="2" fill="#4e4e4e"/><rect x="92" y="158" width="2" height="4" fill="#6e6e6e"/><rect x="137" y="4" width="3" height="3" fill="#7e7e7e"/><rect x="222" y="88" width="2" height="2" fill="#6e6e6e"/><rect x="183" y="20" width="3" height="2" fill="#7e7e7e"/><rect x="220" y="51" width="3" height="4" fill="#8e8e8e"/><rect x="80" y="27" width="4" height="2" fill="#5e5e5e"/><rect x="216" y="51" width="4" height="4" fill="#6e6e6e"/><rect x="121" y="179" width="4" height="3" fill="#5e5e5e"/><rect x="166" y="125" width="2" height="4" fill="#7e7e7e"/><rect x="117" y="193" width="4" height="3" fill="#8e8e8e"/><rect x="116" y="9" width="3" height="3" fill="#7e7e7e"/><rect x="114" y="135" width="4" height="3" fill="#7e7e7e"/><rect x="0" y="53" width="3" height="3" fill="#7e7e7e"/><rect x="218" y="117" width="3" height="3" fill="#4e4e4e"/><rect x="53" y="5" width="4" height="3" fill="#6e6e6e"/><rect x="162" y="7" width="2" height="3" fill="#6e6e6e"/><rect x="113" y="125" width="2" height="2" fill="#6e6e6e"/><rect x="103" y="114" width="4" height="2" fill="#7e7e7e"/><rect x="180" y="182" width="3" height="4" fill="#5e5e5e"/><rect x="10" y="101" width="2" height="3" fill="#8e8e8e"/><rect x="61" y="24" width="4" height="3" fill="#8e8e8e"/><rect x="42" y="85" width="2" height="3" fill="#4e4e4e"/><rect x="233" y="31" width="2" height="3" fill="#4e4e4e"/><rect x="70" y="119" width="4" height="3" fill="#7e7e7e"/><rect x="143" y="68" width="3" height="3" fill="#5e5e5e"/><rect x="81" y="23" width="4" height="2" fill="#5e5e5e"/><rect x="151" y="158" width="2" height="2" fill="#5e5e5e"/><rect x="174" y="23" width="3" height="2" fill="#5e5e5e"/><rect x="123" y="13" width="3" height="3" fill="#6e6e6e"/><rect x="230" y="193" width="3" height="4" fill="#8e8e8e"/><rect x="234" y="89" width="4" height="3" fill="#5e5e5e"/><rect x="192" y="155" width="2" height="3" fill="#8e8e8e"/><rect x="47" y="105" width="4" height="3" fill="#5e5e5e"/><rect x="137" y="174" width="3" height="4" fill="#8e8e8e"/><rect x="213" y="141" width="3" height="3" fill="#7e7e7e"/><rect x="205" y="106" width="3" height="4" fill="#8e8e8e"/><rect x="199" y="179" width="3" height="3" fill="#8e8e8e"/><rect x="210" y="43" width="4" height="4" fill="#4e4e4e"/><rect x="10" y="39" width="2" height="4" fill="#6e6e6e"/><rect x="23" y="194" width="3" height="3" fill="#5e5e5e"/><rect x="153" y="164" width="2" height="4" fill="#5e5e5e"/><rect x="119" y="187" width="3" height="2" fill="#7e7e7e"/><rect x="18" y="49" width="2" height="3" fill="#8e8e8e"/><rect x="145" y="79" width="4" height="2" fill="#5e5e5e"/><rect x="210" y="166" width="3" height="2" fill="#6e6e6e"/><rect x="39" y="165" width="2" height="2" fill="#6e6e6e"/><rect x="58" y="73" width="3" height="4" fill="#6e6e6e"/><rect x="129" y="199" width="3" height="3" fill="#4e4e4e"/><rect x="119" y="45" width="2" height="2" fill="#4e4e4e"/><rect x="211" y="28" width="2" height="2" fill="#4e4e4e"/><rect x="51" y="65" width="2" height="4" fill="#5e5e5e"/><rect x="102" y="57" width="2" height="4" fill="#4e4e4e"/><rect x="194" y="171" width="4" height="4" fill="#7e7e7e"/><rect x="199" y="28" width="4" height="4" fill="#7e7e7e"/><rect x="52" y="29" width="2" height="4" fill="#4e4e4e"/><rect x="76" y="186" width="3" height="3" fill="#5e5e5e"/><rect x="49" y="124" width="3" height="4" fill="#5e5e5e"/><rect x="200" y="165" width="3" height="3" fill="#5e5e5e"/><rect x="89" y="15" width="3" height="4" fill="#7e7e7e"/><rect x="112" y="21" width="3" height="3" fill="#7e7e7e"/><rect x="42" y="191" width="3" height="4" fill="#6e6e6e"/><rect x="182" y="137" width="3" height="3" fill="#8e8e8e"/><rect x="231" y="159" width="4" height="4" fill="#8e8e8e"/><rect x="120" y="150" width="3" height="2" fill="#5e5e5e"/><rect x="47" y="24" width="3" height="3" fill="#5e5e5e"/><rect x="128" y="132" width="4" height="2" fill="#5e5e5e"/><rect x="49" y="190" width="3" height="4" fill="#6e6e6e"/><rect x="110" y="9" width="4" height="3" fill="#7e7e7e"/><rect x="191" y="73" width="2" height="4" fill="#6e6e6e"/><rect x="76" y="105" width="2" height="3" fill="#8e8e8e"/><rect x="39" y="124" width="4" height="3" fill="#7e7e7e"/><rect x="41" y="110" width="4" height="4" fill="#7e7e7e"/><rect x="134" y="138" width="3" height="3" fill="#6e6e6e"/><rect x="73" y="7" width="3" height="3" fill="#8e8e8e"/><rect x="206" y="76" width="2" height="2" fill="#6e6e6e"/><rect x="33" y="161" width="3" height="2" fill="#4e4e4e"/><rect x="42" y="12" width="3" height="4" fill="#5e5e5e"/><rect x="90" y="92" width="2" height="4" fill="#4e4e4e"/><rect x="47" y="61" width="3" height="4" fill="#5e5e5e"/><rect x="231" y="86" width="2" height="4" fill="#5e5e5e"/><rect x="79" y="67" width="4" height="4" fill="#6e6e6e"/><rect x="185" y="66" width="2" height="2" fill="#7e7e7e"/><rect x="109" y="9" width="3" height="3" fill="#6e6e6e"/><rect x="190" y="194" width="3" height="3" fill="#8e8e8e"/><rect x="71" y="4" width="2" height="2" fill="#6e6e6e"/><rect x="124" y="164" width="4" height="4" fill="#5e5e5e"/><rect x="133" y="170" width="4" height="3" fill="#4e4e4e"/><rect x="132" y="161" width="3" height="3" fill="#6e6e6e"/><rect x="18" y="175" width="2" height="4" fill="#6e6e6e"/><rect x="198" y="90" width="4" height="3" fill="#8e8e8e"/><rect x="205" y="65" width="3" height="3" fill="#8e8e8e"/><rect x="147" y="80" width="2" height="4" fill="#6e6e6e"/><rect x="124" y="59" width="3" height="2" fill="#8e8e8e"/><rect x="81" y="147" width="2" height="4" fill="#4e4e4e"/><rect x="32" y="71" width="2" height="4" fill="#7e7e7e"/><rect x="171" y="19" width="2" height="4" fill="#7e7e7e"/><rect x="229" y="192" width="3" height="3" fill="#8e8e8e"/><rect x="235" y="88" width="4" height="4" fill="#6e6e6e"/><rect x="80" y="12" width="3" height="2" fill="#7e7e7e"/><rect x="81" y="81" width="4" height="3" fill="#4e4e4e"/><rect x="9" y="33" width="3" height="4" fill="#8e8e8e"/><rect x="230" y="20" width="3" height="3" fill="#8e8e8e"/><rect x="188" y="20" width="2" height="2" fill="#4e4e4e"/><rect x="161" y="1" width="2" height="4" fill="#7e7e7e"/><rect x="68" y="123" width="3" height="3" fill="#8e8e8e"/><rect x="139" y="143" width="3" height="3" fill="#5e5e5e"/><rect x="124" y="43" width="3" height="3" fill="#6e6e6e"/><rect x="176" y="119" width="2" height="3" fill="#8e8e8e"/><rect x="100" y="13" width="3" height="3" fill="#6e6e6e"/><rect x="48" y="166" width="3" height="2" fill="#6e6e6e"/><rect x="134" y="38" width="3" height="4" fill="#4e4e4e"/><rect x="199" y="27" width="4" height="3" fill="#8e8e8e"/><rect x="6" y="71" width="3" height="2" fill="#5e5e5e"/><rect x="37" y="75" width="4" height="3" fill="#6e6e6e"/><rect x="234" y="154" width="3" height="2" fill="#5e5e5e"/><rect x="94" y="36" width="3" height="2" fill="#8e8e8e"/><rect x="90" y="139" width="2" height="3" fill="#8e8e8e"/><rect x="121" y="5" width="4" height="4" fill="#7e7e7e"/><rect x="118" y="137" width="3" height="4" fill="#4e4e4e"/><rect x="38" y="136" width="4" height="3" fill="#8e8e8e"/><rect x="193" y="152" width="3" height="3" fill="#7e7e7e"/><rect x="219" y="42" width="3" height="3" fill="#7e7e7e"/><rect x="33" y="13" width="2" height="4" fill="#4e4e4e"/><rect x="157" y="45" width="2" height="3" fill="#5e5e5e"/><rect x="222" y="31" width="3" height="3" fill="#8e8e8e"/><rect x="23" y="118" width="4" height="3" fill="#4e4e4e"/><rect x="37" y="151" width="3" height="3" fill="#4e4e4e"/><rect x="116" y="129" width="3" height="3" fill="#4e4e4e"/><rect x="151" y="91" width="3" height="3" fill="#4e4e4e"/><rect x="73" y="76" width="3" height="2" fill="#7e7e7e"/><rect x="154" y="128" width="3" height="3" fill="#6e6e6e"/><rect x="72" y="111" width="4" height="3" fill="#7e7e7e"/><rect x="122" y="85" width="3" height="4" fill="#4e4e4e"/><rect x="158" y="13" width="4" height="4" fill="#5e5e5e"/><rect x="140" y="156" width="2" height="3" fill="#7e7e7e"/><rect x="218" y="97" width="3" height="2" fill="#8e8e8e"/><rect x="93" y="131" width="2" height="4" fill="#6e6e6e"/><rect x="226" y="30" width="4" height="3" fill="#8e8e8e"/><rect x="3" y="76" width="3" height="4" fill="#7e7e7e"/><rect x="112" y="95" width="4" height="3" fill="#5e5e5e"/><rect x="82" y="56" width="3" height="2" fill="#5e5e5e"/><rect x="157" y="0" width="2" height="3" fill="#6e6e6e"/><rect x="82" y="111" width="3" height="2" fill="#7e7e7e"/><rect x="7" y="137" width="4" height="3" fill="#7e7e7e"/><rect x="212" y="184" width="4" height="3" fill="#6e6e6e"/><rect x="174" y="149" width="4" height="3" fill="#5e5e5e"/><rect x="121" y="35" width="3" height="3" fill="#7e7e7e"/><rect x="30" y="44" width="2" height="4" fill="#4e4e4e"/><rect x="7" y="89" width="2" height="4" fill="#8e8e8e"/><rect x="213" y="47" width="3" height="3" fill="#8e8e8e"/><rect x="99" y="52" width="4" height="3" fill="#4e4e4e"/><rect x="111" y="73" width="2" height="2" fill="#5e5e5e"/><rect x="113" y="192" width="2" height="2" fill="#7e7e7e"/><rect x="83" y="122" width="2" height="3" fill="#8e8e8e"/><rect x="164" y="107" width="3" height="3" fill="#4e4e4e"/><rect x="51" y="165" width="2" height="2" fill="#8e8e8e"/><rect x="164" y="132" width="3" height="2" fill="#5e5e5e"/><rect x="46" y="59" width="4" height="3" fill="#8e8e8e"/><rect x="88" y="116" width="3" height="3" fill="#4e4e4e"/><rect x="146" y="76" width="3" height="3" fill="#7e7e7e"/><rect x="158" y="132" width="3" height="3" fill="#7e7e7e"/><rect x="114" y="15" width="3" height="3" fill="#8e8e8e"/><rect x="126" y="55" width="2" height="4" fill="#6e6e6e"/><rect x="30" y="128" width="3" height="3" fill="#8e8e8e"/><rect x="47" y="193" width="3" height="4" fill="#5e5e5e"/><rect x="63" y="98" width="3" height="4" fill="#5e5e5e"/><rect x="93" y="99" width="3" height="3" fill="#6e6e6e"/><rect x="64" y="88" width="2" height="3" fill="#7e7e7e"/><rect x="187" y="28" width="3" height="3" fill="#6e6e6e"/><rect x="113" y="44" width="3" height="3" fill="#4e4e4e"/><rect x="123" y="179" width="3" height="3" fill="#6e6e6e"/><rect x="155" y="59" width="4" height="4" fill="#6e6e6e"/><rect x="153" y="45" width="4" height="3" fill="#7e7e7e"/><rect x="14" y="20" width="4" height="4" fill="#4e4e4e"/><rect x="4" y="148" width="3" height="4" fill="#6e6e6e"/><rect x="175" y="126" width="4" height="4" fill="#6e6e6e"/><rect x="88" y="103" width="4" height="3" fill="#4e4e4e"/><rect x="29" y="183" width="3" height="3" fill="#8e8e8e"/><rect x="149" y="82" width="3" height="3" fill="#5e5e5e"/><rect x="217" y="76" width="3" height="4" fill="#8e8e8e"/><rect x="95" y="126" width="3" height="3" fill="#5e5e5e"/><rect x="159" y="23" width="3" height="3" fill="#4e4e4e"/><rect x="138" y="82" width="3" height="2" fill="#8e8e8e"/><rect x="108" y="173" width="3" height="4" fill="#4e4e4e"/><rect x="122" y="94" width="3" height="3" fill="#4e4e4e"/><rect x="75" y="178" width="4" height="2" fill="#6e6e6e"/><rect x="82" y="141" width="3" height="4" fill="#6e6e6e"/><rect x="44" y="138" width="4" height="3" fill="#8e8e8e"/><rect x="232" y="104" width="3" height="2" fill="#4e4e4e"/><rect x="185" y="14" width="4" height="3" fill="#4e4e4e"/><rect x="42" y="129" width="2" height="2" fill="#6e6e6e"/><rect x="141" y="137" width="4" height="3" fill="#5e5e5e"/><rect x="101" y="70" width="4" height="3" fill="#5e5e5e"/><rect x="175" y="80" width="3" height="2" fill="#6e6e6e"/><rect x="54" y="28" width="3" height="4" fill="#8e8e8e"/><rect x="37" y="67" width="3" height="3" fill="#7e7e7e"/><rect x="146" y="199" width="3" height="3" fill="#4e4e4e"/><rect x="63" y="66" width="3" height="2" fill="#7e7e7e"/><rect x="25" y="180" width="2" height="3" fill="#6e6e6e"/><rect x="117" y="85" width="3" height="3" fill="#5e5e5e"/><rect x="42" y="10" width="3" height="3" fill="#8e8e8e"/><rect x="95" y="112" width="4" height="4" fill="#8e8e8e"/><rect x="65" y="75" width="3" height="4" fill="#4e4e4e"/><rect x="39" y="11" width="3" height="4" fill="#5e5e5e"/><rect x="163" y="0" width="3" height="3" fill="#6e6e6e"/><rect x="217" y="178" width="3" height="2" fill="#7e7e7e"/><rect x="160" y="142" width="3" height="3" fill="#4e4e4e"/><rect x="30" y="40" width="2" height="4" fill="#6e6e6e"/><rect x="109" y="189" width="3" height="2" fill="#7e7e7e"/><rect x="139" y="86" width="3" height="3" fill="#4e4e4e"/><rect x="35" y="22" width="2" height="3" fill="#4e4e4e"/><rect x="24" y="1" width="4" height="4" fill="#5e5e5e"/><rect x="141" y="169" width="4" height="3" fill="#4e4e4e"/><rect x="45" y="179" width="2" height="3" fill="#5e5e5e"/><rect x="174" y="178" width="3" height="2" fill="#8e8e8e"/><rect x="8" y="86" width="3" height="3" fill="#4e4e4e"/><rect x="26" y="11" width="4" height="2" fill="#6e6e6e"/><rect x="206" y="137" width="3" height="3" fill="#8e8e8e"/><rect x="112" y="115" width="2" height="3" fill="#6e6e6e"/><rect x="55" y="58" width="4" height="4" fill="#6e6e6e"/><rect x="24" y="101" width="2" height="3" fill="#7e7e7e"/><rect x="74" y="24" width="4" height="2" fill="#5e5e5e"/><rect x="150" y="86" width="3" height="4" fill="#6e6e6e"/><rect x="145" y="130" width="4" height="3" fill="#7e7e7e"/><rect x="133" y="150" width="3" height="2" fill="#8e8e8e"/><rect x="45" y="115" width="2" height="3" fill="#4e4e4e"/><rect x="237" y="148" width="3" height="4" fill="#4e4e4e"/><rect x="132" y="32" width="3" height="3" fill="#7e7e7e"/><rect x="93" y="134" width="2" height="2" fill="#7e7e7e"/><rect x="127" y="17" width="3" height="4" fill="#8e8e8e"/><rect x="5" y="2" width="4" height="2" fill="#5e5e5e"/><rect x="14" y="181" width="4" height="2" fill="#4e4e4e"/><rect x="12" y="88" width="3" height="4" fill="#7e7e7e"/><rect x="125" y="76" width="3" height="3" fill="#7e7e7e"/><rect x="160" y="144" width="4" height="2" fill="#5e5e5e"/><rect x="29" y="174" width="3" height="2" fill="#6e6e6e"/><rect x="40" y="190" width="3" height="3" fill="#8e8e8e"/><rect x="21" y="172" width="2" height="4" fill="#7e7e7e"/><rect x="17" y="92" width="2" height="4" fill="#8e8e8e"/><rect x="170" y="182" width="4" height="4" fill="#7e7e7e"/><rect x="119" y="87" width="2" height="3" fill="#4e4e4e"/><rect x="78" y="123" width="4" height="3" fill="#7e7e7e"/><rect x="52" y="91" width="3" height="4" fill="#5e5e5e"/><rect x="107" y="122" width="3" height="2" fill="#6e6e6e"/><rect x="169" y="61" width="2" height="4" fill="#4e4e4e"/><rect x="61" y="98" width="3" height="2" fill="#6e6e6e"/><rect x="167" y="45" width="4" height="3" fill="#4e4e4e"/><rect x="110" y="107" width="3" height="4" fill="#4e4e4e"/><rect x="110" y="10" width="4" height="3" fill="#7e7e7e"/><rect x="231" y="185" width="3" height="3" fill="#8e8e8e"/><rect x="35" y="58" width="2" height="4" fill="#6e6e6e"/><rect x="186" y="26" width="4" height="4" fill="#4e4e4e"/><rect x="122" y="96" width="4" height="3" fill="#4e4e4e"/><rect x="121" y="101" width="3" height="2" fill="#5e5e5e"/><rect x="49" y="144" width="3" height="4" fill="#5e5e5e"/><rect x="198" y="131" width="2" height="2" fill="#5e5e5e"/><rect x="152" y="54" width="3" height="4" fill="#7e7e7e"/><rect x="111" y="37" width="3" height="4" fill="#6e6e6e"/><rect x="127" y="80" width="2" height="3" fill="#8e8e8e"/><rect x="140" y="4" width="3" height="3" fill="#4e4e4e"/><rect x="141" y="98" width="2" height="3" fill="#6e6e6e"/><rect x="50" y="21" width="4" height="3" fill="#6e6e6e"/><rect x="218" y="56" width="3" height="2" fill="#7e7e7e"/><rect x="85" y="142" width="3" height="3" fill="#7e7e7e"/><rect x="143" y="186" width="2" height="3" fill="#8e8e8e"/><rect x="208" y="61" width="3" height="2" fill="#6e6e6e"/><rect x="202" y="64" width="3" height="3" fill="#7e7e7e"/><rect x="39" y="88" width="3" height="2" fill="#6e6e6e"/><rect x="116" y="109" width="2" height="4" fill="#7e7e7e"/><rect x="67" y="148" width="3" height="4" fill="#7e7e7e"/><rect x="236" y="52" width="3" height="2" fill="#7e7e7e"/><rect x="27" y="107" width="3" height="3" fill="#8e8e8e"/><rect x="64" y="191" width="2" height="2" fill="#5e5e5e"/><rect x="44" y="81" width="3" height="3" fill="#7e7e7e"/><rect x="83" y="12" width="3" height="2" fill="#5e5e5e"/><rect x="104" y="85" width="3" height="2" fill="#4e4e4e"/><rect x="124" y="113" width="3" height="4" fill="#8e8e8e"/><rect x="0" y="30" width="3" height="4" fill="#6e6e6e"/><rect x="71" y="97" width="3" height="4" fill="#4e4e4e"/><rect x="96" y="121" width="3" height="2" fill="#7e7e7e"/><rect x="139" y="84" width="4" height="4" fill="#8e8e8e"/><rect x="2" y="120" width="3" height="3" fill="#5e5e5e"/><rect x="59" y="136" width="3" height="3" fill="#5e5e5e"/><rect x="188" y="66" width="2" height="3" fill="#7e7e7e"/><rect x="138" y="1" width="3" height="2" fill="#6e6e6e"/><rect x="156" y="13" width="3" height="2" fill="#8e8e8e"/><rect x="164" y="193" width="4" height="3" fill="#4e4e4e"/><rect x="190" y="124" width="4" height="4" fill="#5e5e5e"/><rect x="224" y="166" width="2" height="2" fill="#4e4e4e"/><rect x="228" y="195" width="2" height="3" fill="#5e5e5e"/><rect x="212" y="26" width="2" height="3" fill="#7e7e7e"/><rect x="7" y="53" width="4" height="2" fill="#5e5e5e"/><rect x="31" y="130" width="3" height="4" fill="#6e6e6e"/><rect x="190" y="158" width="3" height="2" fill="#7e7e7e"/><rect x="220" y="49" width="2" height="3" fill="#4e4e4e"/><rect x="193" y="150" width="3" height="3" fill="#8e8e8e"/><rect x="113" y="132" width="4" height="4" fill="#4e4e4e"/><rect x="34" y="158" width="3" height="2" fill="#7e7e7e"/><rect x="59" y="194" width="3" height="4" fill="#6e6e6e"/><rect x="206" y="99" width="3" height="3" fill="#6e6e6e"/><rect x="86" y="88" width="3" height="3" fill="#6e6e6e"/><rect x="18" y="47" width="3" height="4" fill="#8e8e8e"/><rect x="103" y="130" width="3" height="2" fill="#8e8e8e"/><rect x="160" y="89" width="3" height="4" fill="#5e5e5e"/><rect x="14" y="166" width="3" height="4" fill="#8e8e8e"/><rect x="136" y="133" width="3" height="3" fill="#8e8e8e"/><rect x="22" y="176" width="4" height="4" fill="#5e5e5e"/><rect x="101" y="182" width="3" height="3" fill="#6e6e6e"/><rect x="182" y="34" width="3" height="2" fill="#4e4e4e"/><rect x="45" y="51" width="4" height="2" fill="#6e6e6e"/><rect x="74" y="94" width="2" height="2" fill="#6e6e6e"/><rect x="83" y="112" width="4" height="2" fill="#7e7e7e"/><rect x="233" y="162" width="3" height="3" fill="#7e7e7e"/><rect x="160" y="117" width="4" height="3" fill="#4e4e4e"/><rect x="219" y="132" width="3" height="3" fill="#8e8e8e"/><rect x="16" y="51" width="2" height="3" fill="#4e4e4e"/><rect x="225" y="137" width="3" height="2" fill="#5e5e5e"/><rect x="45" y="9" width="3" height="3" fill="#8e8e8e"/><rect x="24" y="43" width="3" height="4" fill="#7e7e7e"/><rect x="181" y="130" width="2" height="2" fill="#4e4e4e"/><rect x="192" y="139" width="3" height="3" fill="#6e6e6e"/><rect x="146" y="73" width="3" height="3" fill="#4e4e4e"/><rect x="220" y="89" width="4" height="3" fill="#4e4e4e"/><rect x="116" y="109" width="2" height="4" fill="#8e8e8e"/><rect x="235" y="103" width="2" height="3" fill="#5e5e5e"/><rect x="107" y="78" width="2" height="2" fill="#7e7e7e"/><rect x="46" y="24" width="2" height="4" fill="#8e8e8e"/><rect x="176" y="108" width="2" height="4" fill="#6e6e6e"/><rect x="10" y="67" width="3" height="4" fill="#7e7e7e"/><rect x="232" y="171" width="4" height="2" fill="#7e7e7e"/><rect x="237" y="59" width="3" height="3" fill="#4e4e4e"/><rect x="191" y="98" width="3" height="3" fill="#7e7e7e"/><rect x="157" y="40" width="3" height="2" fill="#6e6e6e"/><rect x="62" y="166" width="4" height="3" fill="#6e6e6e"/><rect x="49" y="35" width="4" height="4" fill="#4e4e4e"/><rect x="226" y="42" width="3" height="4" fill="#8e8e8e"/><rect x="194" y="146" width="2" height="3" fill="#8e8e8e"/><rect x="96" y="167" width="3" height="3" fill="#5e5e5e"/><rect x="211" y="91" width="3" height="4" fill="#7e7e7e"/><rect x="165" y="143" width="3" height="3" fill="#8e8e8e"/><rect x="132" y="19" width="3" height="3" fill="#7e7e7e"/><rect x="186" y="49" width="4" height="3" fill="#6e6e6e"/><rect x="166" y="184" width="3" height="3" fill="#6e6e6e"/><rect x="222" y="150" width="4" height="3" fill="#7e7e7e"/><rect x="166" y="192" width="2" height="2" fill="#5e5e5e"/><rect x="168" y="148" width="2" height="3" fill="#8e8e8e"/><rect x="79" y="158" width="3" height="3" fill="#7e7e7e"/><rect x="65" y="44" width="4" height="3" fill="#8e8e8e"/><rect x="134" y="61" width="4" height="2" fill="#6e6e6e"/><rect x="49" y="90" width="4" height="2" fill="#5e5e5e"/><rect x="142" y="107" width="2" height="4" fill="#8e8e8e"/><rect x="80" y="105" width="3" height="4" fill="#7e7e7e"/><rect x="219" y="19" width="3" height="2" fill="#8e8e8e"/><rect x="174" y="64" width="2" height="3" fill="#8e8e8e"/><rect x="139" y="17" width="3" height="3" fill="#6e6e6e"/><rect x="194" y="163" width="3" height="4" fill="#6e6e6e"/><rect x="12" y="19" width="2" height="3" fill="#4e4e4e"/><rect x="50" y="159" width="2" height="3" fill="#6e6e6e"/><rect x="90" y="43" width="2" height="3" fill="#4e4e4e"/><rect x="101" y="128" width="2" height="2" fill="#8e8e8e"/><rect x="209" y="82" width="4" height="4" fill="#6e6e6e"/><rect x="199" y="56" width="2" height="2" fill="#5e5e5e"/><rect x="180" y="17" width="3" height="3" fill="#4e4e4e"/><rect x="46" y="113" width="2" height="3" fill="#6e6e6e"/><rect x="18" y="124" width="3" height="3" fill="#4e4e4e"/><rect x="60" y="57" width="3" height="4" fill="#8e8e8e"/><rect x="227" y="172" width="3" height="3" fill="#5e5e5e"/><rect x="210" y="172" width="2" height="3" fill="#7e7e7e"/><rect x="40" y="160" width="2" height="4" fill="#4e4e4e"/><rect x="28" y="197" width="2" height="3" fill="#6e6e6e"/><rect x="214" y="34" width="3" height="3" fill="#4e4e4e"/><rect x="142" y="198" width="2" height="3" fill="#8e8e8e"/><rect x="22" y="112" width="4" height="3" fill="#6e6e6e"/><rect x="30" y="103" width="3" height="3" fill="#4e4e4e"/><rect x="169" y="135" width="2" height="3" fill="#7e7e7e"/><rect x="119" y="104" width="4" height="2" fill="#5e5e5e"/><rect x="213" y="60" width="4" height="3" fill="#4e4e4e"/><rect x="22" y="19" width="2" height="3" fill="#8e8e8e"/><rect x="60" y="82" width="3" height="4" fill="#4e4e4e"/><rect x="234" y="178" width="3" height="2" fill="#8e8e8e"/><rect x="213" y="27" width="2" height="2" fill="#7e7e7e"/><rect x="91" y="80" width="2" height="3" fill="#5e5e5e"/><rect x="66" y="30" width="3" height="4" fill="#5e5e5e"/><rect x="161" y="1" width="4" height="2" fill="#8e8e8e"/><rect x="64" y="87" width="3" height="3" fill="#6e6e6e"/><rect x="166" y="189" width="3" height="3" fill="#5e5e5e"/><rect x="139" y="191" width="3" height="4" fill="#8e8e8e"/><rect x="65" y="21" width="3" height="4" fill="#4e4e4e"/><rect x="171" y="130" width="4" height="3" fill="#5e5e5e"/><rect x="18" y="157" width="3" height="3" fill="#4e4e4e"/><rect x="49" y="56" width="4" height="4" fill="#4e4e4e"/><rect x="168" y="162" width="3" height="3" fill="#7e7e7e"/><rect x="180" y="175" width="2" height="3" fill="#4e4e4e"/><rect x="44" y="129" width="3" height="4" fill="#8e8e8e"/><rect x="151" y="101" width="3" height="4" fill="#8e8e8e"/><rect x="136" y="97" width="2" height="3" fill="#7e7e7e"/><rect x="225" y="27" width="4" height="4" fill="#5e5e5e"/><rect x="66" y="181" width="3" height="2" fill="#8e8e8e"/><rect x="59" y="116" width="4" height="3" fill="#4e4e4e"/><rect x="222" y="27" width="4" height="4" fill="#4e4e4e"/><rect x="54" y="181" width="3" height="2" fill="#8e8e8e"/><rect x="188" y="149" width="3" height="2" fill="#7e7e7e"/><rect x="35" y="151" width="2" height="2" fill="#6e6e6e"/><rect x="122" y="105" width="4" height="4" fill="#4e4e4e"/><rect x="220" y="110" width="3" height="2" fill="#5e5e5e"/><rect x="96" y="105" width="2" height="3" fill="#8e8e8e"/><rect x="45" y="179" width="3" height="2" fill="#6e6e6e"/><rect x="173" y="145" width="3" height="2" fill="#7e7e7e"/><rect x="79" y="92" width="3" height="4" fill="#5e5e5e"/><rect x="84" y="192" width="3" height="4" fill="#5e5e5e"/><rect x="182" y="183" width="3" height="2" fill="#5e5e5e"/><rect x="21" y="63" width="4" height="2" fill="#7e7e7e"/><rect x="122" y="161" width="2" height="4" fill="#8e8e8e"/><rect x="217" y="4" width="4" height="3" fill="#7e7e7e"/><rect x="170" y="103" width="3" height="4" fill="#6e6e6e"/><rect x="193" y="128" width="2" height="2" fill="#5e5e5e"/><rect x="221" y="29" width="2" height="3" fill="#6e6e6e"/><rect x="176" y="82" width="4" height="2" fill="#7e7e7e"/><rect x="105" y="57" width="3" height="2" fill="#5e5e5e"/><rect x="121" y="167" width="4" height="3" fill="#6e6e6e"/><rect x="214" y="80" width="3" height="3" fill="#6e6e6e"/><rect x="142" y="85" width="3" height="4" fill="#5e5e5e"/><rect x="21" y="87" width="3" height="3" fill="#6e6e6e"/><rect x="23" y="33" width="3" height="4" fill="#8e8e8e"/><rect x="133" y="74" width="2" height="4" fill="#4e4e4e"/><rect x="16" y="49" width="2" height="3" fill="#5e5e5e"/><rect x="64" y="80" width="3" height="3" fill="#6e6e6e"/><rect x="160" y="187" width="2" height="3" fill="#4e4e4e"/><rect x="50" y="87" width="3" height="2" fill="#7e7e7e"/><rect x="170" y="44" width="2" height="3" fill="#8e8e8e"/><rect x="202" y="71" width="2" height="3" fill="#7e7e7e"/><rect x="116" y="94" width="3" height="3" fill="#7e7e7e"/><rect x="199" y="147" width="2" height="3" fill="#8e8e8e"/><rect x="180" y="183" width="3" height="4" fill="#6e6e6e"/><rect x="57" y="145" width="3" height="3" fill="#8e8e8e"/><rect x="177" y="93" width="4" height="2" fill="#5e5e5e"/><rect x="130" y="127" width="3" height="3" fill="#6e6e6e"/><rect x="12" y="85" width="3" height="2" fill="#5e5e5e"/><rect x="233" y="60" width="3" height="3" fill="#7e7e7e"/><rect x="45" y="154" width="3" height="3" fill="#8e8e8e"/><rect x="80" y="133" width="3" height="3" fill="#7e7e7e"/><rect x="224" y="82" width="2" height="4" fill="#8e8e8e"/><rect x="59" y="146" width="3" height="2" fill="#5e5e5e"/><rect x="216" y="35" width="2" height="4" fill="#4e4e4e"/><rect x="112" y="66" width="3" height="3" fill="#7e7e7e"/><rect x="73" y="102" width="2" height="2" fill="#5e5e5e"/><rect x="169" y="109" width="3" height="3" fill="#5e5e5e"/><rect x="217" y="129" width="3" height="3" fill="#8e8e8e"/><rect x="84" y="159" width="2" height="4" fill="#8e8e8e"/><rect x="61" y="2" width="3" height="3" fill="#8e8e8e"/><rect x="168" y="65" width="3" height="2" fill="#6e6e6e"/><rect x="56" y="189" width="3" height="3" fill="#5e5e5e"/><rect x="201" y="55" width="2" height="4" fill="#4e4e4e"/><rect x="2" y="113" width="4" height="3" fill="#8e8e8e"/><rect x="23" y="83" width="3" height="3" fill="#4e4e4e"/><rect x="6" y="54" width="3" height="4" fill="#4e4e4e"/><rect x="154" y="120" width="2" height="4" fill="#4e4e4e"/><rect x="118" y="175" width="3" height="3" fill="#7e7e7e"/><rect x="193" y="22" width="2" height="3" fill="#7e7e7e"/><rect x="111" y="136" width="3" height="3" fill="#8e8e8e"/><rect x="152" y="25" width="3" height="3" fill="#5e5e5e"/><rect x="195" y="135" width="3" height="4" fill="#5e5e5e"/><rect x="211" y="75" width="4" height="2" fill="#8e8e8e"/><rect x="131" y="71" width="2" height="3" fill="#7e7e7e"/><rect x="109" y="70" width="3" height="3" fill="#6e6e6e"/><rect x="224" y="61" width="3" height="3" fill="#8e8e8e"/><rect x="16" y="163" width="2" height="4" fill="#5e5e5e"/><rect x="153" y="108" width="4" height="4" fill="#7e7e7e"/><rect x="69" y="94" width="2" height="4" fill="#8e8e8e"/><rect x="128" y="25" width="3" height="3" fill="#6e6e6e"/><rect x="210" y="80" width="2" height="3" fill="#7e7e7e"/><rect x="72" y="128" width="4" height="3" fill="#4e4e4e"/><rect x="89" y="82" width="2" height="2" fill="#6e6e6e"/><rect x="153" y="115" width="3" height="3" fill="#5e5e5e"/><rect x="212" y="110" width="3" height="2" fill="#5e5e5e"/><rect x="88" y="28" width="3" height="3" fill="#6e6e6e"/><rect x="142" y="48" width="4" height="3" fill="#8e8e8e"/><rect x="231" y="53" width="3" height="3" fill="#4e4e4e"/><rect x="90" y="162" width="3" height="3" fill="#7e7e7e"/><rect x="206" y="92" width="3" height="3" fill="#6e6e6e"/><rect x="187" y="48" width="3" height="4" fill="#8e8e8e"/><rect x="225" y="178" width="2" height="2" fill="#8e8e8e"/><rect x="224" y="3" width="4" height="4" fill="#8e8e8e"/><rect x="189" y="155" width="4" height="3" fill="#4e4e4e"/><rect x="74" y="119" width="2" height="3" fill="#7e7e7e"/><rect x="40" y="30" width="2" height="2" fill="#5e5e5e"/><rect x="217" y="72" width="4" height="4" fill="#7e7e7e"/><rect x="150" y="183" width="2" height="2" fill="#7e7e7e"/><rect x="220" y="52" width="4" height="3" fill="#7e7e7e"/><rect x="234" y="191" width="4" height="3" fill="#4e4e4e"/><rect x="154" y="82" width="3" height="3" fill="#8e8e8e"/><rect x="163" y="193" width="3" height="3" fill="#8e8e8e"/><rect x="128" y="54" width="2" height="3" fill="#6e6e6e"/><rect x="187" y="199" width="3" height="3" fill="#8e8e8e"/><rect x="130" y="120" width="4" height="4" fill="#5e5e5e"/><rect x="179" y="119" width="3" height="2" fill="#7e7e7e"/><rect x="124" y="23" width="2" height="3" fill="#7e7e7e"/><rect x="190" y="96" width="4" height="3" fill="#5e5e5e"/><rect x="212" y="98" width="2" height="4" fill="#5e5e5e"/><rect x="195" y="120" width="3" height="2" fill="#8e8e8e"/><rect x="153" y="79" width="2" height="3" fill="#5e5e5e"/><rect x="160" y="151" width="3" height="3" fill="#7e7e7e"/><rect x="174" y="24" width="3" height="2" fill="#4e4e4e"/><rect x="121" y="65" width="2" height="4" fill="#4e4e4e"/><rect x="137" y="161" width="2" height="2" fill="#8e8e8e"/><rect x="79" y="82" width="3" height="4" fill="#7e7e7e"/><rect x="152" y="190" width="3" height="3" fill="#6e6e6e"/><rect x="71" y="156" width="4" height="2" fill="#6e6e6e"/><rect x="39" y="130" width="3" height="3" fill="#7e7e7e"/><rect x="211" y="151" width="3" height="3" fill="#5e5e5e"/><rect x="77" y="188" width="3" height="2" fill="#6e6e6e"/><rect x="21" y="195" width="4" height="2" fill="#4e4e4e"/><rect x="153" y="14" width="4" height="4" fill="#6e6e6e"/><rect x="166" y="153" width="3" height="3" fill="#7e7e7e"/><rect x="187" y="187" width="4" height="2" fill="#4e4e4e"/><rect x="190" y="104" width="3" height="3" fill="#8e8e8e"/><rect x="98" y="121" width="2" height="3" fill="#6e6e6e"/><rect x="185" y="94" width="2" height="3" fill="#5e5e5e"/><rect x="81" y="27" width="4" height="3" fill="#6e6e6e"/><rect x="68" y="149" width="3" height="3" fill="#7e7e7e"/><rect x="108" y="111" width="4" height="3" fill="#4e4e4e"/><rect x="96" y="66" width="4" height="4" fill="#4e4e4e"/><rect x="178" y="158" width="2" height="2" fill="#7e7e7e"/><rect x="112" y="139" width="2" height="2" fill="#4e4e4e"/><rect x="28" y="95" width="3" height="3" fill="#8e8e8e"/><rect x="207" y="54" width="2" height="4" fill="#4e4e4e"/><rect x="206" y="149" width="3" height="4" fill="#8e8e8e"/><rect x="221" y="147" width="2" height="3" fill="#5e5e5e"/><rect x="61" y="166" width="3" height="4" fill="#8e8e8e"/><rect x="179" y="148" width="3" height="3" fill="#6e6e6e"/><rect x="181" y="95" width="3" height="3" fill="#6e6e6e"/><rect x="0" y="128" width="2" height="2" fill="#8e8e8e"/><rect x="155" y="46" width="3" height="3" fill="#8e8e8e"/><rect x="181" y="101" width="2" height="3" fill="#5e5e5e"/><rect x="176" y="178" width="2" height="3" fill="#6e6e6e"/><rect x="221" y="147" width="2" height="2" fill="#4e4e4e"/><rect x="72" y="155" width="3" height="4" fill="#7e7e7e"/><rect x="223" y="175" width="4" height="3" fill="#5e5e5e"/><rect x="130" y="193" width="3" height="2" fill="#5e5e5e"/><rect x="40" y="55" width="4" height="2" fill="#4e4e4e"/><rect x="162" y="164" width="2" height="4" fill="#5e5e5e"/><rect x="112" y="6" width="4" height="3" fill="#7e7e7e"/><rect x="37" y="163" width="4" height="3" fill="#7e7e7e"/><rect x="116" y="187" width="3" height="4" fill="#7e7e7e"/><rect x="180" y="100" width="4" height="4" fill="#5e5e5e"/><rect x="145" y="24" width="3" height="3" fill="#4e4e4e"/><rect x="5" y="68" width="3" height="2" fill="#6e6e6e"/><rect x="228" y="67" width="4" height="3" fill="#6e6e6e"/><rect x="132" y="150" width="3" height="2" fill="#4e4e4e"/><rect x="136" y="166" width="3" height="3" fill="#6e6e6e"/><rect x="213" y="129" width="3" height="4" fill="#5e5e5e"/><rect x="225" y="139" width="4" height="2" fill="#6e6e6e"/><rect x="120" y="191" width="3" height="4" fill="#6e6e6e"/><rect x="19" y="115" width="3" height="3" fill="#8e8e8e"/><rect x="125" y="135" width="3" height="2" fill="#6e6e6e"/><rect x="58" y="21" width="2" height="3" fill="#5e5e5e"/><rect x="228" y="129" width="4" height="2" fill="#4e4e4e"/><rect x="55" y="61" width="3" height="3" fill="#4e4e4e"/><rect x="79" y="19" width="3" height="3" fill="#6e6e6e"/><rect x="38" y="115" width="2" height="2" fill="#7e7e7e"/><rect x="48" y="184" width="3" height="4" fill="#4e4e4e"/><rect x="86" y="138" width="3" height="4" fill="#4e4e4e"/></pattern></defs><rect width="714" height="400" fill="#000"/><rect width="714" height="400" fill="url(#nz)"/></svg>
<div class="b" style="left:1859.5px;top:404px;width:531.0px;height:195.5px;background:#fff;border:6px solid #eded2e"></div>
<svg class="b" style="left:0;top:0" width="2532" height="1208"><rect x="2014.537552155772" y="403.48122392211405" width="5" height="6" fill="#e88080"/><rect x="2122.326147426982" y="403.48122392211405" width="5" height="6" fill="#e88080"/><rect x="1914.3984700973574" y="593.6759388038943" width="5" height="6" fill="#e88080"/><rect x="2003.0632823365786" y="593.6759388038943" width="5" height="6" fill="#e88080"/><rect x="2110.1564673157163" y="593.6759388038943" width="5" height="6" fill="#e88080"/><rect x="2021.2100139082058" y="423.8664812239221" width="2.5" height="2.5" fill="#888"/><rect x="2028.164116828929" y="422.1279554937413" width="2.5" height="2.5" fill="#888"/><rect x="2045.549374130737" y="432.55910987482616" width="2.5" height="2.5" fill="#888"/><rect x="2059.457579972184" y="439.5132127955494" width="2.5" height="2.5" fill="#888"/><rect x="2064.673157162726" y="432.55910987482616" width="2.5" height="2.5" fill="#888"/><rect x="2118.567454798331" y="432.55910987482616" width="2.5" height="2.5" fill="#888"/><rect x="2130.7371349095965" y="418.6509040333797" width="2.5" height="2.5" fill="#888"/><rect x="1939.499304589708" y="569.9026425591098" width="2.5" height="2.5" fill="#888"/><rect x="1944.7148817802504" y="575.1182197496523" width="2.5" height="2.5" fill="#888"/><rect x="1955.1460361613351" y="582.0723226703756" width="2.5" height="2.5" fill="#888"/><rect x="1962.1001390820584" y="580.3337969401947" width="2.5" height="2.5" fill="#888"/><rect x="1944.7148817802504" y="587.287899860918" width="2.5" height="2.5" fill="#888"/><rect x="1982.962447844228" y="575.1182197496523" width="2.5" height="2.5" fill="#888"/><rect x="2021.2100139082058" y="580.3337969401947" width="2.5" height="2.5" fill="#888"/><rect x="2031.6411682892908" y="580.3337969401947" width="2.5" height="2.5" fill="#888"/><rect x="2101.182197496523" y="575.1182197496523" width="2.5" height="2.5" fill="#888"/><rect x="2127.260083449235" y="587.287899860918" width="2.5" height="2.5" fill="#888"/><rect x="1890.8205841446454" y="529.221140472879" width="2.5" height="2.5" fill="#888"/><rect x="1995.1321279554938" y="583.8108484005563" width="2.5" height="2.5" fill="#888"/><path d="M1866.3922114047289,424.08205841446454 L1873.3922114047289,427.08205841446454 L1878.3922114047289,423.08205841446454 L1875.3922114047289,430.08205841446454 L1878.3922114047289,435.08205841446454 L1871.3922114047289,432.08205841446454 L1866.3922114047289,434.08205841446454 L1869.3922114047289,429.08205841446454 Z" fill="#ec7f7f"/><path d="M1931.0653685674547,420.6050069541029 L1938.0653685674547,423.6050069541029 L1943.0653685674547,419.6050069541029 L1940.0653685674547,426.6050069541029 L1943.0653685674547,431.6050069541029 L1936.0653685674547,428.6050069541029 L1931.0653685674547,430.6050069541029 L1934.0653685674547,425.6050069541029 Z" fill="#ec7f7f"/><path d="M1982.1780250347706,422.34353268428373 L1989.1780250347706,425.34353268428373 L1994.1780250347706,421.34353268428373 L1991.1780250347706,428.34353268428373 L1994.1780250347706,433.34353268428373 L1987.1780250347706,430.34353268428373 L1982.1780250347706,432.34353268428373 L1985.1780250347706,427.34353268428373 Z" fill="#ec7f7f"/><path d="M1896.990264255911,491.884561891516 L1903.990264255911,494.884561891516 L1908.990264255911,490.884561891516 L1905.990264255911,497.884561891516 L1908.990264255911,502.884561891516 L1901.990264255911,499.884561891516 L1896.990264255911,501.884561891516 L1899.990264255911,496.884561891516 Z" fill="#ec7f7f"/><path d="M1944.9735744089012,511.00834492350486 L1951.9735744089012,514.0083449235049 L1956.9735744089012,510.00834492350486 L1953.9735744089012,517.0083449235049 L1956.9735744089012,522.0083449235049 L1949.9735744089012,519.0083449235049 L1944.9735744089012,521.0083449235049 L1947.9735744089012,516.0083449235049 Z" fill="#ec7f7f"/><path d="M2004.0834492350486,463.3727399165508 L2011.0834492350486,466.3727399165508 L2016.0834492350486,462.3727399165508 L2013.0834492350486,469.3727399165508 L2016.0834492350486,474.3727399165508 L2009.0834492350486,471.3727399165508 L2004.0834492350486,473.3727399165508 L2007.0834492350486,468.3727399165508 Z" fill="#ec7f7f"/><path d="M2100.3977746870655,455.375521557719 L2107.3977746870655,458.375521557719 L2112.3977746870655,454.375521557719 L2109.3977746870655,461.375521557719 L2112.3977746870655,466.375521557719 L2105.3977746870655,463.375521557719 L2100.3977746870655,465.375521557719 L2103.3977746870655,460.375521557719 Z" fill="#ec7f7f"/><path d="M2105.613351877608,528.393602225313 L2112.613351877608,531.393602225313 L2117.613351877608,527.393602225313 L2114.613351877608,534.393602225313 L2117.613351877608,539.393602225313 L2110.613351877608,536.393602225313 L2105.613351877608,538.393602225313 L2108.613351877608,533.393602225313 Z" fill="#ec7f7f"/><path d="M2124.7371349095965,547.5173852573018 L2131.7371349095965,550.5173852573018 L2136.7371349095965,546.5173852573018 L2133.7371349095965,553.5173852573018 L2136.7371349095965,558.5173852573018 L2129.7371349095965,555.5173852573018 L2124.7371349095965,557.5173852573018 L2127.7371349095965,552.5173852573018 Z" fill="#ec7f7f"/><path d="M2128.9095966620307,511.7037552155772 L2135.9095966620307,514.7037552155772 L2140.9095966620307,510.7037552155772 L2137.9095966620307,517.7037552155772 L2140.9095966620307,522.7037552155772 L2133.9095966620307,519.7037552155772 L2128.9095966620307,521.7037552155772 L2131.9095966620307,516.7037552155772 Z" fill="#ec7f7f"/><path d="M2171.6773296244783,418.8664812239221 L2178.6773296244783,421.8664812239221 L2183.6773296244783,417.8664812239221 L2180.6773296244783,424.8664812239221 L2183.6773296244783,429.8664812239221 L2176.6773296244783,426.8664812239221 L2171.6773296244783,428.8664812239221 L2174.6773296244783,423.8664812239221 Z" fill="#ec7f7f"/><path d="M2220.356050069541,427.55910987482616 L2227.356050069541,430.55910987482616 L2232.356050069541,426.55910987482616 L2229.356050069541,433.55910987482616 L2232.356050069541,438.55910987482616 L2225.356050069541,435.55910987482616 L2220.356050069541,437.55910987482616 L2223.356050069541,432.55910987482616 Z" fill="#ec7f7f"/><path d="M2220.356050069541,456.41863699582757 L2227.356050069541,459.41863699582757 L2232.356050069541,455.41863699582757 L2229.356050069541,462.41863699582757 L2232.356050069541,467.41863699582757 L2225.356050069541,464.41863699582757 L2220.356050069541,466.41863699582757 L2223.356050069541,461.41863699582757 Z" fill="#ec7f7f"/><path d="M2213.4019471488177,514.4853963838665 L2220.4019471488177,517.4853963838665 L2225.4019471488177,513.4853963838665 L2222.4019471488177,520.4853963838665 L2225.4019471488177,525.4853963838665 L2218.4019471488177,522.4853963838665 L2213.4019471488177,524.4853963838665 L2216.4019471488177,519.4853963838665 Z" fill="#ec7f7f"/><path d="M2209.924895688456,568.3796940194716 L2216.924895688456,571.3796940194716 L2221.924895688456,567.3796940194716 L2218.924895688456,574.3796940194716 L2221.924895688456,579.3796940194716 L2214.924895688456,576.3796940194716 L2209.924895688456,578.3796940194716 L2212.924895688456,573.3796940194716 Z" fill="#ec7f7f"/><path d="M2286.4200278164117,413.6509040333797 L2293.4200278164117,416.6509040333797 L2298.4200278164117,412.6509040333797 L2295.4200278164117,419.6509040333797 L2298.4200278164117,424.6509040333797 L2291.4200278164117,421.6509040333797 L2286.4200278164117,423.6509040333797 L2289.4200278164117,418.6509040333797 Z" fill="#ec7f7f"/><path d="M2309.020862308762,528.393602225313 L2316.020862308762,531.393602225313 L2321.020862308762,527.393602225313 L2318.020862308762,534.393602225313 L2321.020862308762,539.393602225313 L2314.020862308762,536.393602225313 L2309.020862308762,538.393602225313 L2312.020862308762,533.393602225313 Z" fill="#ec7f7f"/><path d="M2026.336578581363,540.5632823365786 L2033.336578581363,543.5632823365786 L2038.336578581363,539.5632823365786 L2035.336578581363,546.5632823365786 L2038.336578581363,551.5632823365786 L2031.336578581363,548.5632823365786 L2026.336578581363,550.5632823365786 L2029.336578581363,545.5632823365786 Z" fill="#ec7f7f"/><path d="M2220.356050069541,497.10013908205843 L2227.356050069541,500.10013908205843 L2232.356050069541,496.10013908205843 L2229.356050069541,503.10013908205843 L2232.356050069541,508.10013908205843 L2225.356050069541,505.10013908205843 L2220.356050069541,507.10013908205843 L2223.356050069541,502.10013908205843 Z" fill="#ec7f7f"/><path d="M2015.2100139082058,484.93045897079276 L2022.2100139082058,487.93045897079276 L2027.2100139082058,483.93045897079276 L2024.2100139082058,490.93045897079276 L2027.2100139082058,495.93045897079276 L2020.2100139082058,492.93045897079276 L2015.2100139082058,494.93045897079276 L2018.2100139082058,489.93045897079276 Z" fill="#ec7f7f"/><path d="M2088.2280945758,437.99026425591103 L2095.2280945758,440.99026425591103 L2100.2280945758,436.99026425591103 L2097.2280945758,443.99026425591103 L2100.2280945758,448.99026425591103 L2093.2280945758,445.99026425591103 L2088.2280945758,447.99026425591103 L2091.2280945758,442.99026425591103 Z" fill="#ec7f7f"/><g transform="translate(2170.7,418.7) rotate(-70)"><rect x="-13" y="-3.5" width="26" height="7" fill="#7d4fb0"/><rect x="-8" y="-6" width="4" height="3" fill="#7d4fb0"/><rect x="2" y="-6" width="4" height="3" fill="#7d4fb0"/><rect x="-3" y="3" width="4" height="3" fill="#7d4fb0"/></g><g transform="translate(1895.3,455.2) rotate(-60)"><rect x="-13" y="-3.5" width="26" height="7" fill="#7d4fb0"/><rect x="-8" y="-6" width="4" height="3" fill="#7d4fb0"/><rect x="2" y="-6" width="4" height="3" fill="#7d4fb0"/><rect x="-3" y="3" width="4" height="3" fill="#7d4fb0"/></g><g transform="translate(2021.2,446.5) rotate(-30)"><rect x="-13" y="-3.5" width="26" height="7" fill="#7d4fb0"/><rect x="-8" y="-6" width="4" height="3" fill="#7d4fb0"/><rect x="2" y="-6" width="4" height="3" fill="#7d4fb0"/><rect x="-3" y="3" width="4" height="3" fill="#7d4fb0"/></g><g transform="translate(1976.7,467.3) rotate(-45)"><rect x="-13" y="-3.5" width="26" height="7" fill="#7d4fb0"/><rect x="-8" y="-6" width="4" height="3" fill="#7d4fb0"/><rect x="2" y="-6" width="4" height="3" fill="#7d4fb0"/><rect x="-3" y="3" width="4" height="3" fill="#7d4fb0"/></g><g transform="translate(2024.7,489.9) rotate(-30)"><rect x="-13" y="-3.5" width="26" height="7" fill="#7d4fb0"/><rect x="-8" y="-6" width="4" height="3" fill="#7d4fb0"/><rect x="2" y="-6" width="4" height="3" fill="#7d4fb0"/><rect x="-3" y="3" width="4" height="3" fill="#7d4fb0"/></g><g transform="translate(1996.9,505.6) rotate(15)"><rect x="-13" y="-3.5" width="26" height="7" fill="#7d4fb0"/><rect x="-8" y="-6" width="4" height="3" fill="#7d4fb0"/><rect x="2" y="-6" width="4" height="3" fill="#7d4fb0"/><rect x="-3" y="3" width="4" height="3" fill="#7d4fb0"/></g><g transform="translate(1989.9,521.2) rotate(70)"><rect x="-13" y="-3.5" width="26" height="7" fill="#7d4fb0"/><rect x="-8" y="-6" width="4" height="3" fill="#7d4fb0"/><rect x="2" y="-6" width="4" height="3" fill="#7d4fb0"/><rect x="-3" y="3" width="4" height="3" fill="#7d4fb0"/></g><g transform="translate(2002.1,529.9) rotate(-30)"><rect x="-13" y="-3.5" width="26" height="7" fill="#7d4fb0"/><rect x="-8" y="-6" width="4" height="3" fill="#7d4fb0"/><rect x="2" y="-6" width="4" height="3" fill="#7d4fb0"/><rect x="-3" y="3" width="4" height="3" fill="#7d4fb0"/></g><g transform="translate(2182.9,477.8) rotate(-60)"><rect x="-13" y="-3.5" width="26" height="7" fill="#7d4fb0"/><rect x="-8" y="-6" width="4" height="3" fill="#7d4fb0"/><rect x="2" y="-6" width="4" height="3" fill="#7d4fb0"/><rect x="-3" y="3" width="4" height="3" fill="#7d4fb0"/></g><g transform="translate(2368.9,465.6) rotate(-55)"><rect x="-13" y="-3.5" width="26" height="7" fill="#7d4fb0"/><rect x="-8" y="-6" width="4" height="3" fill="#7d4fb0"/><rect x="2" y="-6" width="4" height="3" fill="#7d4fb0"/><rect x="-3" y="3" width="4" height="3" fill="#7d4fb0"/></g><g transform="translate(2341.1,491.7) rotate(-70)"><rect x="-13" y="-3.5" width="26" height="7" fill="#7d4fb0"/><rect x="-8" y="-6" width="4" height="3" fill="#7d4fb0"/><rect x="2" y="-6" width="4" height="3" fill="#7d4fb0"/><rect x="-3" y="3" width="4" height="3" fill="#7d4fb0"/></g><g transform="translate(2355.0,535.1) rotate(-65)"><rect x="-13" y="-3.5" width="26" height="7" fill="#7d4fb0"/><rect x="-8" y="-6" width="4" height="3" fill="#7d4fb0"/><rect x="2" y="-6" width="4" height="3" fill="#7d4fb0"/><rect x="-3" y="3" width="4" height="3" fill="#7d4fb0"/></g><g transform="translate(2367.2,559.5) rotate(15)"><rect x="-13" y="-3.5" width="26" height="7" fill="#7d4fb0"/><rect x="-8" y="-6" width="4" height="3" fill="#7d4fb0"/><rect x="2" y="-6" width="4" height="3" fill="#7d4fb0"/><rect x="-3" y="3" width="4" height="3" fill="#7d4fb0"/></g><g transform="translate(2341.1,569.9) rotate(30)"><rect x="-13" y="-3.5" width="26" height="7" fill="#7d4fb0"/><rect x="-8" y="-6" width="4" height="3" fill="#7d4fb0"/><rect x="2" y="-6" width="4" height="3" fill="#7d4fb0"/><rect x="-3" y="3" width="4" height="3" fill="#7d4fb0"/></g><g transform="translate(1912.7,552.5) rotate(60)"><rect x="-13" y="-3.5" width="26" height="7" fill="#7d4fb0"/><rect x="-8" y="-6" width="4" height="3" fill="#7d4fb0"/><rect x="2" y="-6" width="4" height="3" fill="#7d4fb0"/><rect x="-3" y="3" width="4" height="3" fill="#7d4fb0"/></g><ellipse cx="2221.8" cy="415.9" rx="10.5" ry="8.5" fill="#9a6a3e" transform="rotate(25 2221.8 415.9)"/><ellipse cx="2331.7" cy="432.6" rx="10.5" ry="8.5" fill="#9a6a3e" transform="rotate(25 2331.7 432.6)"/><ellipse cx="2097.7" cy="440.2" rx="10.5" ry="8.5" fill="#9a6a3e" transform="rotate(25 2097.7 440.2)"/><ellipse cx="2052.5" cy="481.2" rx="10.5" ry="8.5" fill="#9a6a3e" transform="rotate(25 2052.5 481.2)"/><ellipse cx="2101.9" cy="483.0" rx="10.5" ry="8.5" fill="#9a6a3e" transform="rotate(25 2101.9 483.0)"/><ellipse cx="2194.4" cy="466.3" rx="10.5" ry="8.5" fill="#9a6a3e" transform="rotate(25 2194.4 466.3)"/><ellipse cx="2215.9" cy="469.1" rx="10.5" ry="8.5" fill="#9a6a3e" transform="rotate(25 2215.9 469.1)"/><ellipse cx="2226.4" cy="479.5" rx="10.5" ry="8.5" fill="#9a6a3e" transform="rotate(25 2226.4 479.5)"/><ellipse cx="2238.5" cy="515.3" rx="10.5" ry="8.5" fill="#9a6a3e" transform="rotate(25 2238.5 515.3)"/><ellipse cx="2301.8" cy="510.8" rx="10.5" ry="8.5" fill="#9a6a3e" transform="rotate(25 2301.8 510.8)"/><ellipse cx="2178.4" cy="535.1" rx="10.5" ry="8.5" fill="#9a6a3e" transform="rotate(25 2178.4 535.1)"/><ellipse cx="2218.4" cy="546.6" rx="10.5" ry="8.5" fill="#9a6a3e" transform="rotate(25 2218.4 546.6)"/><ellipse cx="2295.9" cy="544.5" rx="10.5" ry="8.5" fill="#9a6a3e" transform="rotate(25 2295.9 544.5)"/><ellipse cx="2318.5" cy="550.1" rx="10.5" ry="8.5" fill="#9a6a3e" transform="rotate(25 2318.5 550.1)"/><ellipse cx="2250.7" cy="567.1" rx="10.5" ry="8.5" fill="#9a6a3e" transform="rotate(25 2250.7 567.1)"/><ellipse cx="2025.4" cy="536.9" rx="10.5" ry="8.5" fill="#9a6a3e" transform="rotate(25 2025.4 536.9)"/><ellipse cx="1997.6" cy="587.3" rx="10.5" ry="8.5" fill="#9a6a3e" transform="rotate(25 1997.6 587.3)"/><ellipse cx="2083.1" cy="573.4" rx="10.5" ry="8.5" fill="#9a6a3e" transform="rotate(25 2083.1 573.4)"/><ellipse cx="2075.1" cy="584.9" rx="10.5" ry="8.5" fill="#9a6a3e" transform="rotate(25 2075.1 584.9)"/><rect x="1996" y="494.5" width="42" height="8.6" fill="#55a83a"/><rect x="2038" y="494.5" width="29.5" height="8.6" fill="#f06a10"/><rect x="2043" y="494.5" width="4" height="3.5" fill="#fff"/><rect x="2053" y="494.5" width="4" height="3.5" fill="#fff"/><rect x="2067.5" y="494.5" width="156" height="8.6" fill="#3a5eaa"/><rect x="2223.6" y="494.5" width="12" height="8.6" fill="#8a8a8a"/></svg>
</body></html>
